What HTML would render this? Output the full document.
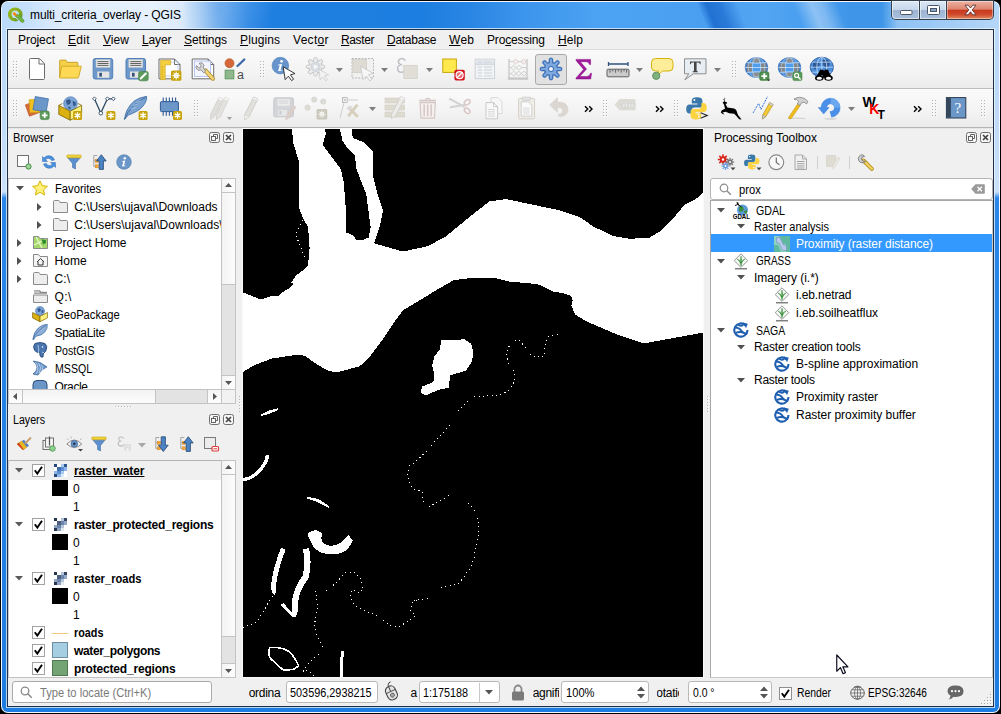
<!DOCTYPE html>
<html><head><meta charset="utf-8"><title>multi_criteria_overlay - QGIS</title>
<style>
*{box-sizing:border-box;margin:0;padding:0}
html,body{width:1001px;height:714px;overflow:hidden;background:#000}
body{font-family:"Liberation Sans",sans-serif;font-size:12px;color:#000;position:relative}
.a{position:absolute}
.t{position:absolute;white-space:pre;line-height:14px;height:14px}
.b{font-weight:bold}
u{text-decoration:underline;text-underline-offset:1px;text-decoration-skip-ink:none}
svg{position:absolute;overflow:visible}
</style></head><body>
<!-- window frame -->
<div class="a" id="win" style="left:0;top:0;width:1001px;height:714px;background:#000"></div>
<div class="a" style="left:1px;top:1px;width:999px;height:712px;border-radius:7px;background:#f4f9ff"></div>
<div class="a" id="glass" style="left:2px;top:2px;width:997px;height:710px;border-radius:6px;background:
linear-gradient(180deg,#bbd9fa 0,#bdd9f8 100px,#c9e1fa 190px,#2a86e8 196px,#2482e6 400px,#1f7de2 100%)"></div>
<!-- title bar -->
<div class="a" id="title" style="left:2px;top:2px;width:997px;height:27px;border-radius:6px 6px 0 0;overflow:hidden;background:
linear-gradient(90deg,#b9d9fb 0,#c6e0fb 26px,#deecfc 60px,#e6f1fc 150px,#dbeafb 180px,#a5cbf3 198px,#62a5ec 216px,#3089e5 246px,#1f7fe0 270px,#1c7ee0 420px,#2a86e4 470px,#3c95ec 520px,#4da3f3 600px,#4a9ff0 700px,#52a5f2 760px,#4a9ff0 800px,#3f95e8 850px,#3f95e8 880px,#8ec2f4 896px,#b5d6f7 997px)">
<div class="a" style="left:700px;top:0;width:40px;height:28px;transform:skewX(22deg);background:linear-gradient(90deg,rgba(25,105,205,0) 0,rgba(25,105,205,.85) 9px,rgba(25,105,205,.7) 22px,rgba(25,105,205,0) 40px)"></div>
<div class="a" style="left:796px;top:0;width:44px;height:28px;transform:skewX(22deg);background:linear-gradient(90deg,rgba(255,255,255,0) 0,rgba(255,255,255,.38) 18px,rgba(255,255,255,.3) 28px,rgba(255,255,255,0) 44px)"></div>
<div class="a" style="left:180px;top:0;width:90px;height:28px;transform:skewX(-25deg);background:linear-gradient(90deg,rgba(255,255,255,0) 0,rgba(255,255,255,.12) 40px,rgba(255,255,255,0) 90px)"></div>
</div>
<!-- client area -->
<div class="a" style="left:6px;top:28px;width:989px;height:680px;border:1px solid rgba(235,245,255,.75)"></div>
<div class="a" id="cborder" style="left:7px;top:29px;width:987px;height:678px;background:#1f3047"></div>
<div class="a" id="client" style="left:8px;top:30px;width:985px;height:676px;background:#f0f0f0"></div>
<div class="t" style="left:30px;top:8px;font-size:12px;letter-spacing:-.11px">multi_criteria_overlay - QGIS</div>
<!-- qgis logo -->
<svg style="left:7px;top:7px" width="18" height="17" viewBox="0 0 18 17"><defs><linearGradient id="qg" x1="0" y1="0" x2="1" y2="1"><stop offset="0" stop-color="#9bb81a"/><stop offset=".55" stop-color="#84ac1e"/><stop offset="1" stop-color="#4f9430"/></linearGradient></defs><path d="M8.200,.4 a7.300,7 0 1 0 0,14 q1.700,0 3.100,-.6 l-2.700,-2.800 q-3.500,.4 -4.200,-3.600 q.2,-3.700 3.800,-3.800 q3.600,.2 3.800,3.700 q0,1 -.4,1.900 l2.800,2.700 q1.200,-1.900 1.200,-4.500 a7.300,7 0 0 0 -7.400,-7 z" fill="url(#qg)"/><path d="M7.900,7.600 l3.300,-.1 5.700,5.600 q.5,1.500 -.4,2.100 q-1,.6 -2.100,-.2 l-5.900,-5.500 z" fill="#6db33f" stroke="#4c8a22" stroke-width=".5"/><circle cx="7.400" cy="6.800" r="1.700" fill="#f6b81c"/><path d="M6.600,6 l3.200,3.200" stroke="#ee7913" stroke-width="1.500"/></svg>
<!-- caption buttons -->
<div class="a" style="left:891px;top:0;width:103px;height:20px;background:#34404e;border-radius:0 0 5px 5px"></div>
<div class="a" style="left:892px;top:1px;width:27px;height:18px;border-radius:0 0 0 4px;background:linear-gradient(#dbe7f5 0,#c6d7ec 48%,#9db5d3 52%,#a9c0dc 100%);box-shadow:inset 0 0 0 1px rgba(255,255,255,.55)"></div>
<div class="a" style="left:920px;top:1px;width:26px;height:18px;background:linear-gradient(#dbe7f5 0,#c6d7ec 48%,#9db5d3 52%,#a9c0dc 100%);box-shadow:inset 0 0 0 1px rgba(255,255,255,.55)"></div>
<div class="a" style="left:947px;top:1px;width:46px;height:18px;border-radius:0 0 4px 0;background:linear-gradient(#eeb3a4 0,#dd8570 45%,#c9391d 52%,#d04a2c 75%,#e08a60 100%);box-shadow:inset 0 0 0 1px rgba(255,255,255,.4)"></div>
<svg style="left:900px;top:10px" width="13" height="5" viewBox="0 0 13 5"><rect x=".5" y=".5" width="11.500" height="4" rx="1" fill="#fff" stroke="#4a5668" stroke-width="1"/></svg>
<svg style="left:927px;top:5px" width="13" height="10" viewBox="0 0 13 10"><rect x=".5" y=".5" width="12" height="9" rx="1" fill="#fff" stroke="#4a5668" stroke-width="1"/><rect x="3.500" y="3.500" width="6" height="3" fill="#8aa6c8" stroke="#4a5668" stroke-width="1"/></svg>
<svg style="left:964px;top:4px" width="13" height="12" viewBox="0 0 13 12"><path d="M1,1.200 h3.200 l2.300,2.800 2.300,-2.800 h3.200 l-3.800,4.700 3.900,4.900 h-3.300 l-2.300,-3 -2.300,3 h-3.300 l3.900,-4.900 z" fill="#fff" stroke="#5a3030" stroke-width=".9" stroke-linejoin="round"/></svg>
<!-- menu + toolbars -->
<div class="a" style="left:8px;top:30px;width:985px;height:19px;background:#f0f0f0"></div>
<div class="a" style="left:8px;top:49px;width:985px;height:1px;background:#dcdcdc"></div>
<div class="t" style="left:18px;top:33px;letter-spacing:-0.06px;">Pro<u>j</u>ect</div>
<div class="t" style="left:68px;top:33px;letter-spacing:0.27px;"><u>E</u>dit</div>
<div class="t" style="left:103px;top:33px;letter-spacing:0.07px;"><u>V</u>iew</div>
<div class="t" style="left:142px;top:33px;letter-spacing:-0.13px;"><u>L</u>ayer</div>
<div class="t" style="left:184px;top:33px;letter-spacing:-0.05px;"><u>S</u>ettings</div>
<div class="t" style="left:240px;top:33px;letter-spacing:0.11px;"><u>P</u>lugins</div>
<div class="t" style="left:293px;top:33px;letter-spacing:0.29px;">Vect<u>o</u>r</div>
<div class="t" style="left:341px;top:33px;letter-spacing:-0.37px;"><u>R</u>aster</div>
<div class="t" style="left:387px;top:33px;letter-spacing:-0.27px;"><u>D</u>atabase</div>
<div class="t" style="left:449px;top:33px;letter-spacing:0.27px;"><u>W</u>eb</div>
<div class="t" style="left:487px;top:33px;letter-spacing:-0.15px;">Pro<u>c</u>essing</div>
<div class="t" style="left:558px;top:33px;letter-spacing:0.1px;"><u>H</u>elp</div>
<div class="a" style="left:8px;top:50px;width:985px;height:38px;background:linear-gradient(#fafafa,#f3f3f3 60%,#ececec)"></div>
<div class="a" style="left:8px;top:88px;width:985px;height:1px;background:#bdbdbd"></div>
<div class="a" style="left:8px;top:89px;width:985px;height:38px;background:linear-gradient(#fbfbfb,#f3f3f3 60%,#ebebeb)"></div>
<div class="a" style="left:8px;top:127px;width:985px;height:1px;background:#b4b4b4"></div>
<div class="a" style="left:8px;top:128px;width:985px;height:1px;background:#e6e6e6"></div>
<svg style="left:13px;top:61px" width="5" height="17" viewBox="0 0 5 17" shape-rendering="crispEdges"><rect x="1" y="1" width="1" height="1" fill="#fff"/><rect x="0" y="0" width="1" height="1" fill="#b2b2b2"/><rect x="4" y="1" width="1" height="1" fill="#fff"/><rect x="3" y="0" width="1" height="1" fill="#b2b2b2"/><rect x="1" y="4" width="1" height="1" fill="#fff"/><rect x="0" y="3" width="1" height="1" fill="#b2b2b2"/><rect x="4" y="4" width="1" height="1" fill="#fff"/><rect x="3" y="3" width="1" height="1" fill="#b2b2b2"/><rect x="1" y="7" width="1" height="1" fill="#fff"/><rect x="0" y="6" width="1" height="1" fill="#b2b2b2"/><rect x="4" y="7" width="1" height="1" fill="#fff"/><rect x="3" y="6" width="1" height="1" fill="#b2b2b2"/><rect x="1" y="10" width="1" height="1" fill="#fff"/><rect x="0" y="9" width="1" height="1" fill="#b2b2b2"/><rect x="4" y="10" width="1" height="1" fill="#fff"/><rect x="3" y="9" width="1" height="1" fill="#b2b2b2"/><rect x="1" y="13" width="1" height="1" fill="#fff"/><rect x="0" y="12" width="1" height="1" fill="#b2b2b2"/><rect x="4" y="13" width="1" height="1" fill="#fff"/><rect x="3" y="12" width="1" height="1" fill="#b2b2b2"/><rect x="1" y="16" width="1" height="1" fill="#fff"/><rect x="0" y="15" width="1" height="1" fill="#b2b2b2"/><rect x="4" y="16" width="1" height="1" fill="#fff"/><rect x="3" y="15" width="1" height="1" fill="#b2b2b2"/></svg>
<svg style="left:260px;top:61px" width="5" height="17" viewBox="0 0 5 17" shape-rendering="crispEdges"><rect x="1" y="1" width="1" height="1" fill="#fff"/><rect x="0" y="0" width="1" height="1" fill="#b2b2b2"/><rect x="4" y="1" width="1" height="1" fill="#fff"/><rect x="3" y="0" width="1" height="1" fill="#b2b2b2"/><rect x="1" y="4" width="1" height="1" fill="#fff"/><rect x="0" y="3" width="1" height="1" fill="#b2b2b2"/><rect x="4" y="4" width="1" height="1" fill="#fff"/><rect x="3" y="3" width="1" height="1" fill="#b2b2b2"/><rect x="1" y="7" width="1" height="1" fill="#fff"/><rect x="0" y="6" width="1" height="1" fill="#b2b2b2"/><rect x="4" y="7" width="1" height="1" fill="#fff"/><rect x="3" y="6" width="1" height="1" fill="#b2b2b2"/><rect x="1" y="10" width="1" height="1" fill="#fff"/><rect x="0" y="9" width="1" height="1" fill="#b2b2b2"/><rect x="4" y="10" width="1" height="1" fill="#fff"/><rect x="3" y="9" width="1" height="1" fill="#b2b2b2"/><rect x="1" y="13" width="1" height="1" fill="#fff"/><rect x="0" y="12" width="1" height="1" fill="#b2b2b2"/><rect x="4" y="13" width="1" height="1" fill="#fff"/><rect x="3" y="12" width="1" height="1" fill="#b2b2b2"/><rect x="1" y="16" width="1" height="1" fill="#fff"/><rect x="0" y="15" width="1" height="1" fill="#b2b2b2"/><rect x="4" y="16" width="1" height="1" fill="#fff"/><rect x="3" y="15" width="1" height="1" fill="#b2b2b2"/></svg>
<svg style="left:732px;top:61px" width="5" height="17" viewBox="0 0 5 17" shape-rendering="crispEdges"><rect x="1" y="1" width="1" height="1" fill="#fff"/><rect x="0" y="0" width="1" height="1" fill="#b2b2b2"/><rect x="4" y="1" width="1" height="1" fill="#fff"/><rect x="3" y="0" width="1" height="1" fill="#b2b2b2"/><rect x="1" y="4" width="1" height="1" fill="#fff"/><rect x="0" y="3" width="1" height="1" fill="#b2b2b2"/><rect x="4" y="4" width="1" height="1" fill="#fff"/><rect x="3" y="3" width="1" height="1" fill="#b2b2b2"/><rect x="1" y="7" width="1" height="1" fill="#fff"/><rect x="0" y="6" width="1" height="1" fill="#b2b2b2"/><rect x="4" y="7" width="1" height="1" fill="#fff"/><rect x="3" y="6" width="1" height="1" fill="#b2b2b2"/><rect x="1" y="10" width="1" height="1" fill="#fff"/><rect x="0" y="9" width="1" height="1" fill="#b2b2b2"/><rect x="4" y="10" width="1" height="1" fill="#fff"/><rect x="3" y="9" width="1" height="1" fill="#b2b2b2"/><rect x="1" y="13" width="1" height="1" fill="#fff"/><rect x="0" y="12" width="1" height="1" fill="#b2b2b2"/><rect x="4" y="13" width="1" height="1" fill="#fff"/><rect x="3" y="12" width="1" height="1" fill="#b2b2b2"/><rect x="1" y="16" width="1" height="1" fill="#fff"/><rect x="0" y="15" width="1" height="1" fill="#b2b2b2"/><rect x="4" y="16" width="1" height="1" fill="#fff"/><rect x="3" y="15" width="1" height="1" fill="#b2b2b2"/></svg>
<svg style="left:13px;top:100px" width="5" height="17" viewBox="0 0 5 17" shape-rendering="crispEdges"><rect x="1" y="1" width="1" height="1" fill="#fff"/><rect x="0" y="0" width="1" height="1" fill="#b2b2b2"/><rect x="4" y="1" width="1" height="1" fill="#fff"/><rect x="3" y="0" width="1" height="1" fill="#b2b2b2"/><rect x="1" y="4" width="1" height="1" fill="#fff"/><rect x="0" y="3" width="1" height="1" fill="#b2b2b2"/><rect x="4" y="4" width="1" height="1" fill="#fff"/><rect x="3" y="3" width="1" height="1" fill="#b2b2b2"/><rect x="1" y="7" width="1" height="1" fill="#fff"/><rect x="0" y="6" width="1" height="1" fill="#b2b2b2"/><rect x="4" y="7" width="1" height="1" fill="#fff"/><rect x="3" y="6" width="1" height="1" fill="#b2b2b2"/><rect x="1" y="10" width="1" height="1" fill="#fff"/><rect x="0" y="9" width="1" height="1" fill="#b2b2b2"/><rect x="4" y="10" width="1" height="1" fill="#fff"/><rect x="3" y="9" width="1" height="1" fill="#b2b2b2"/><rect x="1" y="13" width="1" height="1" fill="#fff"/><rect x="0" y="12" width="1" height="1" fill="#b2b2b2"/><rect x="4" y="13" width="1" height="1" fill="#fff"/><rect x="3" y="12" width="1" height="1" fill="#b2b2b2"/><rect x="1" y="16" width="1" height="1" fill="#fff"/><rect x="0" y="15" width="1" height="1" fill="#b2b2b2"/><rect x="4" y="16" width="1" height="1" fill="#fff"/><rect x="3" y="15" width="1" height="1" fill="#b2b2b2"/></svg>
<svg style="left:194px;top:100px" width="5" height="17" viewBox="0 0 5 17" shape-rendering="crispEdges"><rect x="1" y="1" width="1" height="1" fill="#fff"/><rect x="0" y="0" width="1" height="1" fill="#b2b2b2"/><rect x="4" y="1" width="1" height="1" fill="#fff"/><rect x="3" y="0" width="1" height="1" fill="#b2b2b2"/><rect x="1" y="4" width="1" height="1" fill="#fff"/><rect x="0" y="3" width="1" height="1" fill="#b2b2b2"/><rect x="4" y="4" width="1" height="1" fill="#fff"/><rect x="3" y="3" width="1" height="1" fill="#b2b2b2"/><rect x="1" y="7" width="1" height="1" fill="#fff"/><rect x="0" y="6" width="1" height="1" fill="#b2b2b2"/><rect x="4" y="7" width="1" height="1" fill="#fff"/><rect x="3" y="6" width="1" height="1" fill="#b2b2b2"/><rect x="1" y="10" width="1" height="1" fill="#fff"/><rect x="0" y="9" width="1" height="1" fill="#b2b2b2"/><rect x="4" y="10" width="1" height="1" fill="#fff"/><rect x="3" y="9" width="1" height="1" fill="#b2b2b2"/><rect x="1" y="13" width="1" height="1" fill="#fff"/><rect x="0" y="12" width="1" height="1" fill="#b2b2b2"/><rect x="4" y="13" width="1" height="1" fill="#fff"/><rect x="3" y="12" width="1" height="1" fill="#b2b2b2"/><rect x="1" y="16" width="1" height="1" fill="#fff"/><rect x="0" y="15" width="1" height="1" fill="#b2b2b2"/><rect x="4" y="16" width="1" height="1" fill="#fff"/><rect x="3" y="15" width="1" height="1" fill="#b2b2b2"/></svg>
<svg style="left:603px;top:100px" width="5" height="17" viewBox="0 0 5 17" shape-rendering="crispEdges"><rect x="1" y="1" width="1" height="1" fill="#fff"/><rect x="0" y="0" width="1" height="1" fill="#b2b2b2"/><rect x="4" y="1" width="1" height="1" fill="#fff"/><rect x="3" y="0" width="1" height="1" fill="#b2b2b2"/><rect x="1" y="4" width="1" height="1" fill="#fff"/><rect x="0" y="3" width="1" height="1" fill="#b2b2b2"/><rect x="4" y="4" width="1" height="1" fill="#fff"/><rect x="3" y="3" width="1" height="1" fill="#b2b2b2"/><rect x="1" y="7" width="1" height="1" fill="#fff"/><rect x="0" y="6" width="1" height="1" fill="#b2b2b2"/><rect x="4" y="7" width="1" height="1" fill="#fff"/><rect x="3" y="6" width="1" height="1" fill="#b2b2b2"/><rect x="1" y="10" width="1" height="1" fill="#fff"/><rect x="0" y="9" width="1" height="1" fill="#b2b2b2"/><rect x="4" y="10" width="1" height="1" fill="#fff"/><rect x="3" y="9" width="1" height="1" fill="#b2b2b2"/><rect x="1" y="13" width="1" height="1" fill="#fff"/><rect x="0" y="12" width="1" height="1" fill="#b2b2b2"/><rect x="4" y="13" width="1" height="1" fill="#fff"/><rect x="3" y="12" width="1" height="1" fill="#b2b2b2"/><rect x="1" y="16" width="1" height="1" fill="#fff"/><rect x="0" y="15" width="1" height="1" fill="#b2b2b2"/><rect x="4" y="16" width="1" height="1" fill="#fff"/><rect x="3" y="15" width="1" height="1" fill="#b2b2b2"/></svg>
<svg style="left:674px;top:100px" width="5" height="17" viewBox="0 0 5 17" shape-rendering="crispEdges"><rect x="1" y="1" width="1" height="1" fill="#fff"/><rect x="0" y="0" width="1" height="1" fill="#b2b2b2"/><rect x="4" y="1" width="1" height="1" fill="#fff"/><rect x="3" y="0" width="1" height="1" fill="#b2b2b2"/><rect x="1" y="4" width="1" height="1" fill="#fff"/><rect x="0" y="3" width="1" height="1" fill="#b2b2b2"/><rect x="4" y="4" width="1" height="1" fill="#fff"/><rect x="3" y="3" width="1" height="1" fill="#b2b2b2"/><rect x="1" y="7" width="1" height="1" fill="#fff"/><rect x="0" y="6" width="1" height="1" fill="#b2b2b2"/><rect x="4" y="7" width="1" height="1" fill="#fff"/><rect x="3" y="6" width="1" height="1" fill="#b2b2b2"/><rect x="1" y="10" width="1" height="1" fill="#fff"/><rect x="0" y="9" width="1" height="1" fill="#b2b2b2"/><rect x="4" y="10" width="1" height="1" fill="#fff"/><rect x="3" y="9" width="1" height="1" fill="#b2b2b2"/><rect x="1" y="13" width="1" height="1" fill="#fff"/><rect x="0" y="12" width="1" height="1" fill="#b2b2b2"/><rect x="4" y="13" width="1" height="1" fill="#fff"/><rect x="3" y="12" width="1" height="1" fill="#b2b2b2"/><rect x="1" y="16" width="1" height="1" fill="#fff"/><rect x="0" y="15" width="1" height="1" fill="#b2b2b2"/><rect x="4" y="16" width="1" height="1" fill="#fff"/><rect x="3" y="15" width="1" height="1" fill="#b2b2b2"/></svg>
<svg style="left:932px;top:100px" width="5" height="17" viewBox="0 0 5 17" shape-rendering="crispEdges"><rect x="1" y="1" width="1" height="1" fill="#fff"/><rect x="0" y="0" width="1" height="1" fill="#b2b2b2"/><rect x="4" y="1" width="1" height="1" fill="#fff"/><rect x="3" y="0" width="1" height="1" fill="#b2b2b2"/><rect x="1" y="4" width="1" height="1" fill="#fff"/><rect x="0" y="3" width="1" height="1" fill="#b2b2b2"/><rect x="4" y="4" width="1" height="1" fill="#fff"/><rect x="3" y="3" width="1" height="1" fill="#b2b2b2"/><rect x="1" y="7" width="1" height="1" fill="#fff"/><rect x="0" y="6" width="1" height="1" fill="#b2b2b2"/><rect x="4" y="7" width="1" height="1" fill="#fff"/><rect x="3" y="6" width="1" height="1" fill="#b2b2b2"/><rect x="1" y="10" width="1" height="1" fill="#fff"/><rect x="0" y="9" width="1" height="1" fill="#b2b2b2"/><rect x="4" y="10" width="1" height="1" fill="#fff"/><rect x="3" y="9" width="1" height="1" fill="#b2b2b2"/><rect x="1" y="13" width="1" height="1" fill="#fff"/><rect x="0" y="12" width="1" height="1" fill="#b2b2b2"/><rect x="4" y="13" width="1" height="1" fill="#fff"/><rect x="3" y="12" width="1" height="1" fill="#b2b2b2"/><rect x="1" y="16" width="1" height="1" fill="#fff"/><rect x="0" y="15" width="1" height="1" fill="#b2b2b2"/><rect x="4" y="16" width="1" height="1" fill="#fff"/><rect x="3" y="15" width="1" height="1" fill="#b2b2b2"/></svg>
<svg style="left:981px;top:100px" width="5" height="17" viewBox="0 0 5 17" shape-rendering="crispEdges"><rect x="1" y="1" width="1" height="1" fill="#fff"/><rect x="0" y="0" width="1" height="1" fill="#b2b2b2"/><rect x="4" y="1" width="1" height="1" fill="#fff"/><rect x="3" y="0" width="1" height="1" fill="#b2b2b2"/><rect x="1" y="4" width="1" height="1" fill="#fff"/><rect x="0" y="3" width="1" height="1" fill="#b2b2b2"/><rect x="4" y="4" width="1" height="1" fill="#fff"/><rect x="3" y="3" width="1" height="1" fill="#b2b2b2"/><rect x="1" y="7" width="1" height="1" fill="#fff"/><rect x="0" y="6" width="1" height="1" fill="#b2b2b2"/><rect x="4" y="7" width="1" height="1" fill="#fff"/><rect x="3" y="6" width="1" height="1" fill="#b2b2b2"/><rect x="1" y="10" width="1" height="1" fill="#fff"/><rect x="0" y="9" width="1" height="1" fill="#b2b2b2"/><rect x="4" y="10" width="1" height="1" fill="#fff"/><rect x="3" y="9" width="1" height="1" fill="#b2b2b2"/><rect x="1" y="13" width="1" height="1" fill="#fff"/><rect x="0" y="12" width="1" height="1" fill="#b2b2b2"/><rect x="4" y="13" width="1" height="1" fill="#fff"/><rect x="3" y="12" width="1" height="1" fill="#b2b2b2"/><rect x="1" y="16" width="1" height="1" fill="#fff"/><rect x="0" y="15" width="1" height="1" fill="#b2b2b2"/><rect x="4" y="16" width="1" height="1" fill="#fff"/><rect x="3" y="15" width="1" height="1" fill="#b2b2b2"/></svg>
<svg style="left:335.5px;top:67.5px" width="7" height="4" viewBox="0 0 7 4"><path d="M0,0 h7 l-3.5,4 z" fill="#7d7d7d"/></svg>
<svg style="left:380.5px;top:67.5px" width="7" height="4" viewBox="0 0 7 4"><path d="M0,0 h7 l-3.5,4 z" fill="#7d7d7d"/></svg>
<svg style="left:425.5px;top:67.5px" width="7" height="4" viewBox="0 0 7 4"><path d="M0,0 h7 l-3.5,4 z" fill="#7d7d7d"/></svg>
<svg style="left:635.5px;top:67.5px" width="7" height="4" viewBox="0 0 7 4"><path d="M0,0 h7 l-3.5,4 z" fill="#7d7d7d"/></svg>
<svg style="left:713.5px;top:67.5px" width="7" height="4" viewBox="0 0 7 4"><path d="M0,0 h7 l-3.5,4 z" fill="#7d7d7d"/></svg>
<svg style="left:368.5px;top:106.5px" width="7" height="4" viewBox="0 0 7 4"><path d="M0,0 h7 l-3.5,4 z" fill="#7d7d7d"/></svg>
<svg style="left:848.0px;top:106.5px" width="7" height="4" viewBox="0 0 7 4"><path d="M0,0 h7 l-3.5,4 z" fill="#7d7d7d"/></svg>
<svg style="left:226.5px;top:117.0px" width="5" height="3" viewBox="0 0 5 3"><path d="M0,0 h5 l-2.5,3 z" fill="#a0a0a0"/></svg>
<svg style="left:584px;top:104.5px" width="10" height="8" viewBox="0 0 10 8"><path d="M1,1.200 L3.800,4 1,6.800 M5.200,1.200 L8,4 5.200,6.800" fill="none" stroke="#000" stroke-width="1.400"/></svg>
<svg style="left:655px;top:104.5px" width="10" height="8" viewBox="0 0 10 8"><path d="M1,1.200 L3.800,4 1,6.800 M5.200,1.200 L8,4 5.200,6.800" fill="none" stroke="#000" stroke-width="1.400"/></svg>
<svg style="left:912.5px;top:104.5px" width="10" height="8" viewBox="0 0 10 8"><path d="M1,1.200 L3.800,4 1,6.800 M5.200,1.200 L8,4 5.200,6.800" fill="none" stroke="#000" stroke-width="1.400"/></svg>
<div class="a" style="left:535px;top:54px;width:32px;height:31px;background:#e1e1e1;border:1px solid #a9a9a9;border-radius:3px"></div>
<svg style="left:25px;top:57px" width="24" height="24" viewBox="0 0 24 24"><path d="M5.500,1.500 h8.500 q.4,0 .7,.3 l4.500,4.500 q.3,.3 .3,.7 v14.500 q0,1 -1,1 h-13 q-1,0 -1,-1 v-19 q0,-1 1,-1 z" fill="#fff" stroke="#6c6c6c"/><path d="M14,1.800 v5.200 h5.200" fill="none" stroke="#6c6c6c"/></svg>
<svg style="left:58px;top:57px" width="24" height="24" viewBox="0 0 24 24"><path d="M1.7,20.5 v-16.6 q0,-.8 .8,-.8 h5 q.6,0 .9,.6 l.8,1.6 h9.8 q.8,0 .8,.8 v3" fill="#f7d04a" stroke="#c9a227"/><path d="M3.6,9.2 h19.2 q.6,0 .4,.6 l-2.7,10.6 q-.2,.6 -.8,.6 h-17.6 q-.6,0 -.4,-.6 z" fill="#fdd955" stroke="#d2ab2a"/></svg>
<svg style="left:91px;top:57px" width="24" height="24" viewBox="0 0 24 24"><rect x="2.2" y="1.5" width="19.5" height="20.5" rx="2" fill="#6d98c9" stroke="#5080b8"/><rect x="5" y="2.5" width="14" height="8" fill="#e6e6e6" stroke="#b8c4d0" stroke-width=".5"/><path d="M6.5,4.6 h11 M6.5,6.5 h11 M6.5,8.4 h11" stroke="#555" stroke-width=".9"/><rect x="6.3" y="14.5" width="12" height="6.3" fill="#e4e4e4"/><rect x="8.3" y="15.8" width="2.6" height="3.8" fill="#34507a"/></svg>
<svg style="left:124px;top:57px" width="24" height="24" viewBox="0 0 24 24"><rect x="2" y="1.5" width="19.5" height="20.5" rx="2" fill="#6d98c9" stroke="#5080b8"/><rect x="4.8" y="2.5" width="14" height="8" fill="#e6e6e6" stroke="#b8c4d0" stroke-width=".5"/><path d="M6.3,4.6 h11 M6.3,6.5 h11 M6.3,8.4 h11" stroke="#555" stroke-width=".9"/><rect x="6" y="14.5" width="12" height="6.3" fill="#e4e4e4"/><rect x="8" y="15.8" width="2.6" height="3.8" fill="#34507a"/><rect x="14.6" y="14.4" width="9.6" height="9.4" rx="1.8" fill="#5b9a5b" stroke="#3f7f3f" stroke-width=".6"/><path d="M16.8,21.5 l5,-5" stroke="#fff" stroke-width="2" stroke-linecap="round"/></svg>
<svg style="left:157.5px;top:57px" width="24" height="24" viewBox="0 0 24 24"><path d="M1,2 h15.5 l5.5,5.5 v14.3 h-21 z" fill="#fff" stroke="#6a6a6a"/><path d="M16.5,2 v5.5 h5.5" fill="none" stroke="#6a6a6a"/><rect x="4" y="5" width="16" height="14" fill="none" stroke="#b8c8f0" stroke-width=".8"/><path d="M2.6,3.4 h10 v4.4 h-5.4 v14.8 h-4.6 z" fill="#f5cf3c" stroke="#d0a818" stroke-width=".7"/><path d="M3.5,10 h2 M3.5,12.5 h1.4 M3.5,15 h2 M3.5,17.5 h1.4 M3.5,20 h2" stroke="#b08a10" stroke-width=".6"/><rect x="13" y="13.4" width="10.4" height="10.4" rx="1.6" fill="#c8a40a"/><circle cx="18.2" cy="18.6" r="2" fill="none" stroke="#fff" stroke-width="1.2"/><path d="M18.2,14.6 v8 M14.2,18.6 h8 M15.4,15.8 l5.6,5.6 M21,15.8 l-5.6,5.6" stroke="#fff" stroke-width=".9"/></svg>
<svg style="left:190.5px;top:57px" width="24" height="24" viewBox="0 0 24 24"><path d="M1.200,2 h16 l5.500,5.500 v14.300 h-21.500 z" fill="#fff" stroke="#6a6a6a"/><path d="M17.200,2 v5.500 h5.500" fill="none" stroke="#6a6a6a"/><rect x="3.400" y="4" width="16" height="15.500" fill="#f2f5ff" stroke="#a8b8ee" stroke-width=".8"/><path d="M14.600,13.600 l7.200,8" stroke="#a88820" stroke-width="4.200" stroke-linecap="round"/><path d="M14.600,13.600 l7.200,8" stroke="#f3d77a" stroke-width="2.600" stroke-linecap="round"/><path d="M8.200,6.200 l2.800,-.4 2,2.400 -.9,2.800 2.600,3 -2,1.800 -2.700,-3 -2.900,.5 -2.200,-2.400 .7,-2.300 2.200,2.400 1.800,-.4 .5,-1.700 z" fill="#dcdcdc" stroke="#7a7a7a" stroke-width=".8" stroke-linejoin="round"/></svg>
<svg style="left:223px;top:57px" width="24" height="24" viewBox="0 0 24 24"><circle cx="6.5" cy="6.2" r="4.5" fill="#d4683a" stroke="#b8501f" stroke-width=".6"/><path d="M14.5,9 l6.8,-6.5" stroke="#3d6aa8" stroke-width="2.3" stroke-linecap="round"/><rect x="2.2" y="13.2" width="8.6" height="8.6" fill="#8fb88f" stroke="#5f9a5f"/><text x="14" y="21.600" font-family="Liberation Sans" font-size="12.500" fill="#4d4d4d">a</text></svg>
<svg style="left:269px;top:57px" width="24" height="24" viewBox="0 0 24 24"><circle cx="11.4" cy="8.6" r="8.3" fill="#6694cb" stroke="#4a7ab8" stroke-width=".6"/><circle cx="12.6" cy="4.3" r="1.4" fill="#fff"/><path d="M9.3,7.6 l3.8,-.6 -1.6,6 1.8,-.3 -.2,.9 -4,.6 1.6,-5.9 -1.6,.2 z" fill="#fff"/><path d="M14.2,9.8 l11.8,6.8 -4.6,1.2 3.2,4.4 -2,1.4 -3.2,-4.4 -3.2,3.4 z" fill="#fff" stroke="#222" stroke-width=".9" stroke-linejoin="round"/></svg>
<svg style="left:304.5px;top:57px" width="24" height="24" viewBox="0 0 24 24"><g transform="translate(-1.500,-2.200)"><g fill="#ececec" stroke="#c2c2c2" stroke-width="1" stroke-linejoin="round"><circle cx="12" cy="12" r="6.400"/><rect x="10.300" y="2.800" width="3.400" height="6" rx="1.600" transform="rotate(0 12 12)"/><rect x="10.300" y="2.800" width="3.400" height="6" rx="1.600" transform="rotate(45 12 12)"/><rect x="10.300" y="2.800" width="3.400" height="6" rx="1.600" transform="rotate(90 12 12)"/><rect x="10.300" y="2.800" width="3.400" height="6" rx="1.600" transform="rotate(135 12 12)"/><rect x="10.300" y="2.800" width="3.400" height="6" rx="1.600" transform="rotate(180 12 12)"/><rect x="10.300" y="2.800" width="3.400" height="6" rx="1.600" transform="rotate(225 12 12)"/><rect x="10.300" y="2.800" width="3.400" height="6" rx="1.600" transform="rotate(270 12 12)"/><rect x="10.300" y="2.800" width="3.400" height="6" rx="1.600" transform="rotate(315 12 12)"/></g><circle cx="12" cy="12" r="5.900" fill="#ececec"/><rect x="10.800" y="3.400" width="2.400" height="5" rx="1.200" fill="#ececec" transform="rotate(0 12 12)"/><rect x="10.800" y="3.400" width="2.400" height="5" rx="1.200" fill="#ececec" transform="rotate(45 12 12)"/><rect x="10.800" y="3.400" width="2.400" height="5" rx="1.200" fill="#ececec" transform="rotate(90 12 12)"/><rect x="10.800" y="3.400" width="2.400" height="5" rx="1.200" fill="#ececec" transform="rotate(135 12 12)"/><rect x="10.800" y="3.400" width="2.400" height="5" rx="1.200" fill="#ececec" transform="rotate(180 12 12)"/><rect x="10.800" y="3.400" width="2.400" height="5" rx="1.200" fill="#ececec" transform="rotate(225 12 12)"/><rect x="10.800" y="3.400" width="2.400" height="5" rx="1.200" fill="#ececec" transform="rotate(270 12 12)"/><rect x="10.800" y="3.400" width="2.400" height="5" rx="1.200" fill="#ececec" transform="rotate(315 12 12)"/><circle cx="12" cy="12" r="4.600" fill="#d8dde3" stroke="#c6cad0" stroke-width=".7"/><path d="M10.400,9.400 l4.400,2.600 -4.400,2.600 z" fill="#f8f8f8"/></g><path d="M13.800,12 l9.800,5.800 -4,1 2.800,3.900 -1.700,1.200 -2.800,-3.900 -2.700,2.900 z" fill="#f2f2f2" stroke="#cbcbcb" stroke-width=".8"/></svg>
<svg style="left:350.5px;top:57px" width="24" height="24" viewBox="0 0 24 24"><rect x="1" y="1.500" width="21.500" height="19.500" fill="#f1f1f1" stroke="#adadad" stroke-width=".9" stroke-dasharray="1.800 1.400"/><rect x="1.800" y="2.300" width="13.800" height="13.400" fill="#dddbd2" stroke="#cbc9c0" stroke-width=".6"/><path d="M9.600,9.200 l12.800,7.200 -4.900,1.200 3.400,4.800 -2.100,1.500 -3.400,-4.800 -3.400,3.600 z" fill="#f6f6f6" stroke="#c4c4c4" stroke-width=".8"/></svg>
<svg style="left:395.5px;top:57px" width="24" height="24" viewBox="0 0 24 24"><path d="M9.400,4 q-1.200,-2.800 -4.200,-2.400 q-3,.6 -2.800,3.400 q.4,2.600 3.800,2.600 q-4.400,.2 -4.600,3.800 q0,3.800 4.200,3.800 q2.800,0 4,-2.400" fill="none" stroke="#bdbdc4" stroke-width="1.400"/><rect x="7.800" y="8.300" width="13.400" height="13.200" fill="#e0ded6" stroke="#cfcdc4" stroke-width=".7"/></svg>
<svg style="left:440.5px;top:57px" width="24" height="24" viewBox="0 0 24 24"><rect x="1.8" y="2" width="13.6" height="13.4" fill="#ffe94e" stroke="#c8a608" stroke-width="1"/><rect x="13.4" y="12.8" width="10.4" height="10.8" rx="1.8" fill="#d4141e"/><circle cx="18.6" cy="18.2" r="3.5" fill="#e86a70" stroke="#fff" stroke-width="1.2"/><path d="M16.2,20.6 l4.8,-4.8" stroke="#fff" stroke-width="1.3"/></svg>
<svg style="left:473px;top:57px" width="24" height="24" viewBox="0 0 24 24"><rect x="2.2" y="2.2" width="19.4" height="19.4" fill="#f1f3f5" stroke="#c9d0d8"/><rect x="2.7" y="2.7" width="18.4" height="4.4" fill="#e4e8ec"/><path d="M2.2,7.2 h19.4" stroke="#c9d0d8"/><path d="M5,5 h4 M11,5 h8 M5,10 h4 M11,10 h8 M5,13 h4 M11,13 h8 M5,16 h4 M11,16 h8 M5,19 h4 M11,19 h8" stroke="#cdd4dc" stroke-width="1.2"/></svg>
<svg style="left:505.5px;top:57px" width="24" height="24" viewBox="0 0 24 24"><path d="M3,2 v20 M21,2 v20" stroke="#c4c4c4" stroke-width="1.2"/><path d="M1.8,21.6 h20.4" stroke="#c8c8c8" stroke-width="2.4"/><path d="M3,4.6 h18 M3,10.6 h18 M3,16.6 h18" stroke="#c8c8c8" stroke-width=".9"/><g fill="#f3f3f3" stroke-width=".9"><path d="M7,4.6 l2.6,-2.4 2.6,2.4 -2.6,2.4 z M15,4.6 l2.6,-2.4 2.6,2.4 -2.6,2.4 z" stroke="#d9c4c4"/><path d="M5,10.6 l2.6,-2.4 2.6,2.4 -2.6,2.4 z M10.4,10.6 l2.6,-2.4 2.6,2.4 -2.6,2.4 z" stroke="#cdd4c8"/><path d="M5,16.6 l2.6,-2.4 2.6,2.4 -2.6,2.4 z M10.2,16.6 l2.6,-2.4 2.6,2.4 -2.6,2.4 z M15.4,16.6 l2.6,-2.4 2.6,2.4 -2.6,2.4 z" stroke="#ccc"/></g></svg>
<svg style="left:539px;top:57px" width="24" height="24" viewBox="0 0 24 24"><g fill="#3b6fb8" stroke="#3b6fb8" stroke-width=".4"><circle cx="12" cy="12" r="6.900"/><rect x="9.900" y=".8" width="4.200" height="7.500" rx="2.100" transform="rotate(0 12 12)"/><rect x="9.900" y=".8" width="4.200" height="7.500" rx="2.100" transform="rotate(45 12 12)"/><rect x="9.900" y=".8" width="4.200" height="7.500" rx="2.100" transform="rotate(90 12 12)"/><rect x="9.900" y=".8" width="4.200" height="7.500" rx="2.100" transform="rotate(135 12 12)"/><rect x="9.900" y=".8" width="4.200" height="7.500" rx="2.100" transform="rotate(180 12 12)"/><rect x="9.900" y=".8" width="4.200" height="7.500" rx="2.100" transform="rotate(225 12 12)"/><rect x="9.900" y=".8" width="4.200" height="7.500" rx="2.100" transform="rotate(270 12 12)"/><rect x="9.900" y=".8" width="4.200" height="7.500" rx="2.100" transform="rotate(315 12 12)"/></g><circle cx="12" cy="12" r="5.900" fill="#7ea7de"/><rect x="10.900" y="1.800" width="2.200" height="6.500" rx="1.100" fill="#7ea7de" transform="rotate(0 12 12)"/><rect x="10.900" y="1.800" width="2.200" height="6.500" rx="1.100" fill="#7ea7de" transform="rotate(45 12 12)"/><rect x="10.900" y="1.800" width="2.200" height="6.500" rx="1.100" fill="#7ea7de" transform="rotate(90 12 12)"/><rect x="10.900" y="1.800" width="2.200" height="6.500" rx="1.100" fill="#7ea7de" transform="rotate(135 12 12)"/><rect x="10.900" y="1.800" width="2.200" height="6.500" rx="1.100" fill="#7ea7de" transform="rotate(180 12 12)"/><rect x="10.900" y="1.800" width="2.200" height="6.500" rx="1.100" fill="#7ea7de" transform="rotate(225 12 12)"/><rect x="10.900" y="1.800" width="2.200" height="6.500" rx="1.100" fill="#7ea7de" transform="rotate(270 12 12)"/><rect x="10.900" y="1.800" width="2.200" height="6.500" rx="1.100" fill="#7ea7de" transform="rotate(315 12 12)"/><circle cx="12" cy="12" r="2.900" fill="#3b6fb8"/><circle cx="12" cy="12" r="2" fill="#eef3fa"/></svg>
<svg style="left:572px;top:57px" width="24" height="24" viewBox="0 0 24 24"><path d="M4,2.4 h14.6 v5.2 h-1.1 q-.6,-2.9 -3.2,-2.9 h-6 l6.3,7.4 -6.9,7.4 h7 q2.8,0 3.8,-3.2 h1.1 l-.9,5.7 h-14.7 v-1 l7.6,-8.6 -7.6,-9 z" fill="#a01a9c" stroke="#8a0a86" stroke-width=".5"/></svg>
<svg style="left:605.5px;top:57px" width="24" height="24" viewBox="0 0 24 24"><rect x="1" y="12.2" width="22" height="7.6" rx="1" fill="#cbcbcb" stroke="#5f5f5f"/><path d="M4,12.5 v3.2 M6.8,12.5 v2 M9.6,12.5 v3.2 M12.4,12.5 v2 M15.2,12.5 v3.2 M18,12.5 v2 M20.6,12.5 v3.2" stroke="#555" stroke-width=".9"/><path d="M2.5,7 h19.5 M2.5,5 v4 M22,5 v4" stroke="#2f527e" stroke-width="1.3"/></svg>
<svg style="left:650px;top:57px" width="24" height="24" viewBox="0 0 24 24"><path d="M5.5,1.5 h13.5 q4,0 4,4 v4.5 q0,4 -4,4 h-6.5 l-5,4.4 1,-4.4 h-3 q-4,0 -4,-4 v-4.5 q0,-4 4,-4 z" fill="#fdec98" stroke="#d6b30a" stroke-width="1"/><circle cx="6.2" cy="18.8" r="3.6" fill="#7fb27f" stroke="#5d8f5d"/></svg>
<svg style="left:683px;top:57px" width="24" height="24" viewBox="0 0 24 24"><path d="M1.5,1.8 h21.5 v15 h-12.6 l-8.6,6 4,-6 h-4.3 z" fill="#e6eef3" stroke="#8d8d8d"/><path d="M7,4.6 h10.6 v2.6 h-.6 q-.3,-1.6 -1.8,-1.6 h-1.6 v8 q0,1 1.4,1 v.6 h-5.4 v-.6 q1.4,0 1.4,-1 v-8 h-1.6 q-1.5,0 -1.8,1.6 h-.6 z" fill="#444"/></svg>
<svg style="left:744.5px;top:57px" width="24" height="24" viewBox="0 0 24 24"><ellipse cx="11.500" cy="10.500" rx="11.300" ry="10" fill="#3a80d2" stroke="#2a62b4" stroke-width=".6"/><ellipse cx="11.500" cy="10.500" rx="9" ry="9.700" fill="#4a92e2"/><path d="M2.200,6.200 q2.600,-.6 5,0 q-.8,4.300 0,8.600 q-2.400,.6 -5,0 q-1.600,-4.300 0,-8.600 z" fill="#858585"/><path d="M15.800,6.200 q2.600,-.6 5,0 q1.600,4.300 0,8.600 q-2.600,.6 -5,0 q.8,-4.300 0,-8.600 z" fill="#858585"/><path d="M8.400,1.300 q3.100,-1 6.200,0 q.9,1.900 1.100,4.100 q-4.200,.6 -8.400,0 q.2,-2.200 1.100,-4.100 z" fill="#8d8d8d"/><path d="M8.400,19.700 q3.100,1 6.200,0 q.9,-1.900 1.100,-4.100 q-4.200,-.6 -8.400,0 q.2,2.200 1.100,4.100 z" fill="#8d8d8d"/><path d="M7.400,6 q4.100,-.6 8.200,0 q.8,4.500 0,9 q-4.100,.6 -8.200,0 q-.8,-4.500 0,-9 z" fill="#4f9cec"/><ellipse cx="11.500" cy="10.500" rx="4.200" ry="9.800" fill="none" stroke="#bcdcfb" stroke-width=".7"/><path d="M.3,10.500 h22.400 M2,5.600 q9.500,1.200 19,0 M2,15.400 q9.500,-1.200 19,0" fill="none" stroke="#cfe6ff" stroke-width=".8"/><ellipse cx="11.500" cy="10.500" rx="8.400" ry="9.900" fill="none" stroke="#a8d0f8" stroke-width=".6"/><rect x="14.6" y="14.8" width="9.4" height="8.6" rx="1.6" fill="#4f8f4f" stroke="#3a7a3a" stroke-width=".5"/><path d="M19.3,16.2 v5.8 M16.4,19.1 h5.8" stroke="#fff" stroke-width="1.9"/><path d="M22,22.4 h3.4 l-1.7,1.9 z" fill="#333"/></svg>
<svg style="left:777.5px;top:57px" width="24" height="24" viewBox="0 0 24 24"><ellipse cx="11.500" cy="10.500" rx="11.300" ry="10" fill="#3a80d2" stroke="#2a62b4" stroke-width=".6"/><ellipse cx="11.500" cy="10.500" rx="9" ry="9.700" fill="#4a92e2"/><path d="M2.200,6.200 q2.600,-.6 5,0 q-.8,4.300 0,8.600 q-2.400,.6 -5,0 q-1.600,-4.300 0,-8.600 z" fill="#858585"/><path d="M15.800,6.200 q2.600,-.6 5,0 q1.600,4.300 0,8.600 q-2.600,.6 -5,0 q.8,-4.300 0,-8.600 z" fill="#858585"/><path d="M8.400,1.300 q3.100,-1 6.200,0 q.9,1.900 1.100,4.100 q-4.200,.6 -8.400,0 q.2,-2.200 1.100,-4.100 z" fill="#8d8d8d"/><path d="M8.400,19.700 q3.100,1 6.200,0 q.9,-1.900 1.100,-4.100 q-4.200,-.6 -8.400,0 q.2,2.200 1.100,4.100 z" fill="#8d8d8d"/><path d="M7.400,6 q4.100,-.6 8.200,0 q.8,4.500 0,9 q-4.100,.6 -8.200,0 q-.8,-4.500 0,-9 z" fill="#4f9cec"/><ellipse cx="11.500" cy="10.500" rx="4.200" ry="9.800" fill="none" stroke="#bcdcfb" stroke-width=".7"/><path d="M.3,10.500 h22.400 M2,5.600 q9.500,1.200 19,0 M2,15.400 q9.500,-1.200 19,0" fill="none" stroke="#cfe6ff" stroke-width=".8"/><ellipse cx="11.500" cy="10.500" rx="8.400" ry="9.900" fill="none" stroke="#a8d0f8" stroke-width=".6"/><rect x="14.8" y="14.8" width="9.2" height="8.8" rx="1.6" fill="#5a9a5a" stroke="#3a7a3a" stroke-width=".5"/><circle cx="18.6" cy="18.4" r="2" fill="none" stroke="#fff" stroke-width="1.2"/><path d="M20.2,20 l2.4,2.4" stroke="#fff" stroke-width="1.4"/></svg>
<svg style="left:810px;top:57px" width="24" height="24" viewBox="0 0 24 24"><ellipse cx="11.8" cy="10.2" rx="11.6" ry="10" fill="#4d8fd8" stroke="#1f4f94" stroke-width=".8"/><path d="M3,6 q3,-3 6,-1 l1,3 -3,2 -2,3 -2,-3 z M12,3 l5,-.5 3,3 -1,4 -4,1 -2,-3 z M15,12 l4,1 -1,4 -3,-1 z" fill="#2d5a96"/><path d="M.3,10.2 h23 M2.200,5.200 h19.200 M2.200,15.200 h19.200" stroke="#d4e8ff" stroke-width=".7"/><ellipse cx="11.8" cy="10.200" rx="5" ry="10" fill="none" stroke="#d4e8ff" stroke-width=".7"/><path d="M11.8,.2 v20" stroke="#d4e8ff" stroke-width=".7"/><g transform="translate(2,0)"><path d="M8.200,12.800 h3 l.6,1.200 h.4 l.6,-1.200 h3 l4.200,8 h-9 l-.2,-2.500 h-1.600 l-.2,2.500 h-5.200 z" fill="#000"/><ellipse cx="7.300" cy="21" rx="4.300" ry="2.700" fill="#000"/><ellipse cx="16.500" cy="21" rx="4.300" ry="2.700" fill="#000"/><ellipse cx="7.300" cy="21.200" rx="2.700" ry="1.500" fill="#fff"/><ellipse cx="16.500" cy="21.200" rx="2.700" ry="1.500" fill="#fff"/></g></svg>
<svg style="left:25px;top:96px" width="24" height="24" viewBox="0 0 24 24"><rect x="2" y="6.5" width="12" height="12" fill="#d8693a" stroke="#b85424" stroke-width=".6" transform="rotate(-20 8 12.5)"/><rect x="4.5" y="3.4" width="12.5" height="13" fill="#f2c01e" stroke="#c99a10" stroke-width=".6" transform="rotate(-4 10 10)"/><rect x="9" y="1.6" width="13.4" height="13.4" fill="#6b96c8" stroke="#3f6ea8" stroke-width=".7" transform="rotate(10 15.7 8.3)"/><rect x="15.200000000000001" y="15" width="9" height="8.600" rx="1.800" fill="#5b9a5b" stroke="#3f7f3f" stroke-width=".6"/><path d="M19.7,16.5 v5.600 M16.9,19.3 h5.600" stroke="#fff" stroke-width="1.800"/></svg>
<svg style="left:58px;top:96px" width="24" height="24" viewBox="0 0 24 24"><circle cx="12.5" cy="7.6" r="6.9" fill="#7aa3d6" stroke="#4f7ab4" stroke-width=".6"/><path d="M8,4.5 l3,-1.5 2,2 -1,3 -3,1 z M14.5,5 l3,1 .5,3 -2.5,1.5 z M10,10.5 l2.5,.5 v2.5 l-2,-1 z" fill="#35598c"/><path d="M.8,9.4 l11.4,5.8 v9 l-11.4,-5.8 z" fill="#dbb112" stroke="#7a6200" stroke-width=".8" stroke-linejoin="round"/><path d="M12.2,15.2 l11.4,-5.8 v9 l-11.4,5.8 z" fill="#fbf07a" stroke="#7a6200" stroke-width=".8" stroke-linejoin="round"/><path d="M.8,9.4 l3.6,-1.9 M23.6,9.4 l-3.6,-1.9" stroke="#7a6200" stroke-width=".8"/><rect x="15.0" y="15.0" width="9" height="9" rx="1.500" fill="#c8a40a"/><path d="M19.5,19.5 m0,-3.200 v6.400 m-2.800,-4.800 l5.600,3.200 m0,-3.200 l-5.600,3.200" stroke="#fff" stroke-width="1.3" fill="none"/></svg>
<svg style="left:91px;top:96px" width="24" height="24" viewBox="0 0 24 24"><path d="M3.4,2.8 l6.4,14.2 6.6,-14.2 h6" fill="none" stroke="#2f4a62" stroke-width="1.3" stroke-linejoin="round"/><path d="M3.4,.9 l1.9,1.9 -1.9,1.9 -1.9,-1.9 z M16.4,.9 l1.9,1.9 -1.9,1.9 -1.9,-1.9 z M22.4,.9 l1.7,1.9 -1.7,1.9 -1.9,-1.9 z" fill="#fff" stroke="#2f4a62" stroke-width=".9"/><circle cx="9.8" cy="17.2" r="1.8" fill="#fff" stroke="#2f4a62" stroke-width=".9"/><rect x="15.4" y="15.0" width="9" height="9" rx="1.500" fill="#c8a40a"/><path d="M19.9,19.5 m0,-3.200 v6.400 m-2.800,-4.800 l5.600,3.200 m0,-3.200 l-5.600,3.200" stroke="#fff" stroke-width="1.3" fill="none"/></svg>
<svg style="left:124px;top:96px" width="24" height="24" viewBox="0 0 24 24"><path d="M.4,23.600 Q1.500,17 3.200,13.900 Q6,8.500 10,5.200 Q15,1.500 22.600,.3 Q22.800,3 21.800,5.600 Q20.500,8.500 18.800,10.400 Q16,13.500 12.800,15.200 Q9,17.400 4.600,19 Q2,21 .4,23.600 Z" fill="#7ba3d2" stroke="#3a68a4" stroke-width=".8" stroke-linejoin="round"/><path d="M.8,23 Q6,9 21.500,1.500" fill="none" stroke="#2f5a94" stroke-width=".7"/><path d="M9,9.500 l4.500,-1.500 M12,6.500 l4.500,-1.500 M6.500,13 l5,-1.500" stroke="#c4d8ee" stroke-width=".6"/><rect x="14.6" y="15.0" width="9" height="9" rx="1.500" fill="#c8a40a"/><path d="M19.1,19.5 m0,-3.200 v6.400 m-2.800,-4.800 l5.600,3.200 m0,-3.200 l-5.600,3.200" stroke="#fff" stroke-width="1.3" fill="none"/></svg>
<svg style="left:158px;top:96px" width="24" height="24" viewBox="0 0 24 24"><rect x="2.4" y="5.6" width="18" height="10" rx="1.2" fill="#6b96c8" stroke="#2f5a94" stroke-width="1"/><path d="M5.2,1.5 v4 M8.3,1.5 v4 M11.4,1.5 v4 M14.5,1.5 v4 M17.6,1.5 v4 M5.2,15.8 v4 M8.3,15.8 v4 M11.4,15.8 v4 M14.5,15.8 v4" stroke="#2f5a94" stroke-width="1.1"/><rect x="15.0" y="15.0" width="9" height="9" rx="1.500" fill="#c8a40a"/><path d="M19.5,19.5 m0,-3.200 v6.400 m-2.800,-4.800 l5.600,3.200 m0,-3.200 l-5.600,3.200" stroke="#fff" stroke-width="1.3" fill="none"/></svg>
<svg style="left:208px;top:96px" width="24" height="24" viewBox="0 0 24 24"><path d="M11,1 l4,1.800 -8.500,17.600 -4,3 .2,-4.800 z" fill="#e0deda" stroke="#c8c6c2" stroke-width=".6"/><path d="M17,1 l4,1.800 -8.500,17.600 -4,3 .2,-4.800 z" fill="#e4e2de" stroke="#c8c6c2" stroke-width=".6"/><path d="M11,1 l4,1.800 -1,2 -4,-1.800 z M17,1 l4,1.800 -1,2 -4,-1.800 z" fill="#f4f4f4"/></svg>
<svg style="left:240px;top:96px" width="24" height="24" viewBox="0 0 24 24"><path d="M13.500,1 l4.400,2 -8.800,17.800 -4.600,3.200 .2,-5.200 z" fill="#e2e0dc" stroke="#c6c4be" stroke-width=".7"/><path d="M13.500,1 l4.400,2 -1,2 -4.400,-2 z" fill="#f6f6f6" stroke="#cfcfcf" stroke-width=".5"/><path d="M4.700,18.800 l4.400,2 -4.600,3.200 z" fill="#eeeeee" stroke="#cfcfcf" stroke-width=".4"/></svg>
<svg style="left:272px;top:96px" width="24" height="24" viewBox="0 0 24 24"><rect x="1.800" y="1.800" width="19.600" height="19" rx="1.600" fill="#d3d5d9" stroke="#c6c8cc"/><rect x="5.600" y="3.200" width="12" height="6.600" fill="#ececec"/><path d="M7,5 h9 M7,7 h9" stroke="#d0d0d0" stroke-width=".9"/><rect x="6" y="14" width="9" height="6" fill="#e6e6e6"/><rect x="7.400" y="15" width="2" height="3.600" fill="#c6cad0"/><path d="M21,9.500 l3,1.600 -6.600,10.600 -3.600,2.400 .4,-4 z" fill="#dccfca" stroke="#cfc4c0" stroke-width=".5"/></svg>
<svg style="left:305.5px;top:96px" width="24" height="24" viewBox="0 0 24 24"><circle cx="8.2" cy="3.6" r="2.6" fill="#dedcd6" stroke="#cfcdc6" stroke-width=".6"/><circle cx="17.2" cy="5.6" r="2.6" fill="#dedcd6" stroke="#cfcdc6" stroke-width=".6"/><circle cx="1.6" cy="11.6" r="2.6" fill="#dedcd6" stroke="#cfcdc6" stroke-width=".6"/><rect x="10.6" y="13" width="10.6" height="10.6" rx="1.4" fill="#c9c6ba"/><circle cx="15.9" cy="18.3" r="1.9" fill="none" stroke="#f4f4f0" stroke-width="1.1"/><path d="M15.9,14.2 v8.2 M11.8,18.3 h8.2 M13,15.4 l5.8,5.8 M18.8,15.4 l-5.8,5.8" stroke="#f4f4f0" stroke-width=".8"/></svg>
<svg style="left:339px;top:96px" width="24" height="24" viewBox="0 0 24 24"><rect x="3.4" y="1.6" width="4.8" height="4.8" fill="#f6f6f6" stroke="#b0b0b0" stroke-width=".8"/><path d="M4.6,2.8 l2.4,2.4 M7,2.8 l-2.4,2.4" stroke="#b0b0b0" stroke-width=".7"/><path d="M8.4,4 h10.4" stroke="#d4d4d4" stroke-width="1.2"/><path d="M5,6.6 l-4,15.4" stroke="#c8c8c8" stroke-width=".9"/><path d="M9.2,11.4 l9.6,9.4" stroke="#d6d0bc" stroke-width="3"/><path d="M18.4,8.6 l-9.2,11.6" stroke="#d6d0bc" stroke-width="3"/><path d="M7.2,12.6 q2.4,-4 6.2,-2.6 l-2.6,4.4 z" fill="#d9d9d9"/></svg>
<svg style="left:383px;top:96px" width="24" height="24" viewBox="0 0 24 24"><rect x="2" y="2" width="19.6" height="5" fill="#dddbd0" stroke="#d0cec4" stroke-width=".6"/><rect x="2" y="9" width="19.6" height="5" fill="#dddbd0" stroke="#d0cec4" stroke-width=".6"/><rect x="2" y="16" width="19.6" height="5" fill="#dddbd0" stroke="#d0cec4" stroke-width=".6"/><path d="M17.6,.6 l4.2,1.9 -9.4,17.4 -4,2.8 .2,-4.6 z" fill="#ecebe8" stroke="#c9c7c2" stroke-width=".7"/><path d="M17.6,.6 l4.2,1.9 -1,1.9 -4.2,-1.9 z" fill="#fafafa" stroke="#d0d0d0" stroke-width=".5"/></svg>
<svg style="left:416px;top:96px" width="24" height="24" viewBox="0 0 24 24"><path d="M4,6.6 h15.4 l-1,15.6 h-13.4 z" fill="#f4f0f0" stroke="#d6c6c6" stroke-width="1.2"/><path d="M8.2,8.6 v11.6 M11.7,8.6 v11.6 M15.2,8.6 v11.6" stroke="#d8c8c8" stroke-width="1.6"/><path d="M3.4,4.6 h16.6" stroke="#d6c6c6" stroke-width="1.8"/><path d="M9.2,3.6 q2.5,-2.4 5,0" fill="none" stroke="#d6c6c6" stroke-width="1.1"/></svg>
<svg style="left:449px;top:96px" width="24" height="24" viewBox="0 0 24 24"><path d="M1,3 l14,7.6 M1.6,11.2 l13.6,-2.2" stroke="#d4d4d4" stroke-width="2.2" stroke-linecap="round"/><ellipse cx="18.2" cy="6.2" rx="3.2" ry="2.2" fill="none" stroke="#d8c4c4" stroke-width="1.4" transform="rotate(-35 18.2 6.2)"/><ellipse cx="18.2" cy="14.8" rx="3.2" ry="2.2" fill="none" stroke="#d8c4c4" stroke-width="1.4" transform="rotate(40 18.2 14.8)"/></svg>
<svg style="left:482px;top:96px" width="24" height="24" viewBox="0 0 24 24"><path d="M9,1.6 h7 l4,4 v12 h-11 z" fill="#f7f7f7" stroke="#d9d9d9"/><path d="M4,6.6 h7.6 l4,4 v12.2 h-11.6 z" fill="#f9f9f9" stroke="#c9c9c9"/><path d="M11.6,6.6 v4 h4" fill="none" stroke="#c9c9c9"/><path d="M6,13.6 h7 M6,15.8 h7 M6,18 h7 M6,20.2 h7" stroke="#d2d2d2" stroke-width=".9"/></svg>
<svg style="left:515px;top:96px" width="24" height="24" viewBox="0 0 24 24"><rect x="3.6" y="2.4" width="16" height="20.4" rx="1" fill="#efede8" stroke="#d4d0c8"/><rect x="7.6" y="1" width="8" height="3.6" fill="#e0e0e0" stroke="#d0d0d0" stroke-width=".6"/><path d="M6.2,5.8 h7 l3.6,3.6 v10.8 h-10.6 z" fill="#fafafa" stroke="#c8c8c8" stroke-width=".8"/><path d="M8,12 h6.6 M8,14 h6.6 M8,16 h6.6 M8,18 h6.6" stroke="#d0d0d0" stroke-width=".8"/></svg>
<svg style="left:548px;top:96px" width="24" height="24" viewBox="0 0 24 24"><path d="M1.6,9 l8,-7.6 v4.6 q10,-.4 10.4,7.4 q.2,6.4 -7.6,7.2 q-2.4,0 -2.2,-2.2 q4.4,-.4 4.4,-3.8 q-.2,-3.2 -5,-3.2 v5 z" fill="#dcd6d0" stroke="#d4cec8" stroke-width=".5"/></svg>
<svg style="left:614px;top:96px" width="24" height="24" viewBox="0 0 24 24"><path d="M5.6,3.6 h15.4 v10.2 h-15.4 l-4.6,-5.1 z" fill="#deddd5" stroke="#d2d1c8" stroke-width=".6"/><text x="5.6" y="12.4" font-family="Liberation Sans" font-weight="bold" font-size="9.5" fill="#f4f4f0" stroke="#c4c4c4" stroke-width=".3">abc</text></svg>
<svg style="left:686px;top:96px" width="24" height="24" viewBox="0 0 24 24"><path d="M11,1.2 q-5.2,0 -5.2,3.4 v2.8 h5.6 v1 h-7.8 q-3.4,0 -3.4,4.6 q0,4.6 3.4,4.6 h2 v-3 q0,-3 3.2,-3 h5 q2.6,0 2.6,-2.8 v-4.2 q0,-3.4 -5.4,-3.4 z" fill="#3b78aa"/><circle cx="8.4" cy="4" r="1" fill="#fff"/><path d="M12.6,22.8 q5.2,0 5.2,-3.4 v-2.8 h-5.6 v-1 h7.8 q3.4,0 3.4,-4.6 q0,-4.6 -3.4,-4.6 h-2 v3 q0,3 -3.2,3 h-5 q-2.6,0 -2.6,2.8 v4.2 q0,3.4 5.4,3.4 z" fill="#fdd340" transform="translate(-2.6,.6)"/><circle cx="12.8" cy="20.6" r="1" fill="#fff"/><path d="M14.6,16.8 l6.6,2.6 -6.6,2.8" fill="none" stroke="#333" stroke-width="1.2"/><path d="M11,18.2 h3" stroke="#fff" stroke-width=".8"/></svg>
<svg style="left:719px;top:96px" width="24" height="24" viewBox="0 0 24 24"><path d="M5.4,.8 l.6,3 -2.2,-.8 1.8,2 -2,1.4 1.4,2.2 1,4.2 -3.2,1.4 -1,2.4 2.6,2 .6,-.8 -1.6,-1.4 3.4,-.6 3.4,1.4 5,.6 2.4,2.4 2.6,3 2.4,.2 -3.6,-4.4 -1.2,-3.4 q-.6,-3 -4.4,-3.4 l-5,-.6 -1.8,-3.6 1.6,-.8 -.6,-1.2 -1.6,-.2 -.4,-2.4 1,-1.4 -1.2,.8 z" fill="#000"/></svg>
<svg style="left:752px;top:96px" width="24" height="24" viewBox="0 0 24 24"><path d="M1,17 l5.6,-9.6 2.4,6 6.6,-13" fill="none" stroke="#3b7ae0" stroke-width="1" stroke-dasharray="2 .9"/><path d="M17.6,6.6 l3.6,2 -7.4,12 -3.4,2.4 .4,-4.2 z" fill="#f1c93a" stroke="#b8941a" stroke-width=".7"/><path d="M17.6,6.6 l3.6,2 -.9,1.5 -3.6,-2 z" fill="#ddd" stroke="#999" stroke-width=".5"/><path d="M10.8,18.8 l3,1.8 -3.4,2.4 z" fill="#ccc" stroke="#888" stroke-width=".4"/></svg>
<svg style="left:785.5px;top:96px" width="24" height="24" viewBox="0 0 24 24"><path d="M2,22.6 q8,-1.2 17,0" stroke="#ccc" stroke-width="1" fill="none"/><path d="M11.6,8 l2.6,1.6 -9,13 q-1.8,.8 -2.8,-.8 z" fill="#f0bc18" stroke="#c8960a" stroke-width=".6"/><path d="M8,3.2 q5,-3.6 11,-.4 l3,2.8 -1.6,2.4 -2.2,-1.8 -2.6,.6 -1.6,2.8 -2.6,-1.6 1.2,-2.6 q-1.6,-2.4 -4.6,-2.2 z" fill="#d0d0d0" stroke="#7a7a7a" stroke-width=".7"/></svg>
<svg style="left:818px;top:96px" width="24" height="24" viewBox="0 0 24 24"><ellipse cx="12.6" cy="22.900" rx="6.500" ry=".8" fill="#d4d4d4"/><path d="M13.6,21.200 A9.500,9.500 0 1 0 3.100,11.600 L.3,11.600 L5.700,18 L11.100,11.600 L8.800,11.600 A3.800,3.800 0 1 1 12,15.400 Z" fill="#4a90e8" stroke="#3a7fd8" stroke-width=".5" stroke-linejoin="round"/><path d="M13,2.100 a9.500,9.500 0 0 1 9.100,9.500 h-5.700 a3.800,3.800 0 0 0 -3.800,-3.800 z" fill="#8cc0f8" opacity=".5"/></svg>
<svg style="left:863px;top:96px" width="24" height="24" viewBox="0 0 24 24"><text x="-.6" y="10.8" font-family="Liberation Sans" font-weight="bold" font-size="14" fill="#000">W</text><text x="6.2" y="17.8" font-family="Liberation Sans" font-weight="bold" font-size="14" fill="#f00">K</text><text x="14.4" y="22.6" font-family="Liberation Sans" font-weight="bold" font-size="12" fill="#000">T</text></svg>
<svg style="left:943.5px;top:96px" width="24" height="24" viewBox="0 0 24 24"><rect x="2.4" y="1.6" width="19.400" height="20.400" fill="#6b96c8" stroke="#2b3a4c" stroke-width="1"/><rect x="2.900" y="2.100" width="4" height="19.400" fill="#33465c"/><text x="10.600" y="17" font-family="Liberation Serif" font-size="15" fill="#fff">?</text></svg>
<!-- browser dock -->
<div class="t" style="left:13px;top:131px;transform:scaleX(0.925);transform-origin:0 0;">Browser</div>
<svg style="left:209px;top:132px" width="11" height="11" viewBox="0 0 11 11"><rect x=".5" y=".5" width="10" height="10" rx="2" fill="#f6f6f6" stroke="#6e6e6e"/><rect x="2.5" y="4.5" width="4" height="4" fill="none" stroke="#555" stroke-width=".9"/><path d="M4.5,4.3 v-1.800 h4 v4 h-1.800" fill="none" stroke="#555" stroke-width=".9"/></svg>
<svg style="left:223px;top:132px" width="11" height="11" viewBox="0 0 11 11"><rect x=".5" y=".5" width="10" height="10" rx="2" fill="#f6f6f6" stroke="#6e6e6e"/><path d="M3,3 l5,5 M8,3 l-5,5" stroke="#444" stroke-width="1.700"/></svg>
<svg style="left:16px;top:154px" width="16" height="16" viewBox="0 0 16 16"><rect x="1.500" y="1.500" width="11" height="11" fill="#fff" stroke="#707070"/><circle cx="12.500" cy="12.500" r="2.600" fill="#9fd49f" stroke="#3f8f3f"/></svg>
<svg style="left:41px;top:154px" width="16" height="16" viewBox="0 0 16 16"><path d="M13.500,6 a6,6 0 0 0 -10.500,-2 l-1.500,-1.500 v5 h5 l-1.800,-1.800 a3.500,3.500 0 0 1 6,.9 z M2.500,10 a6,6 0 0 0 10.500,2 l1.500,1.500 v-5 h-5 l1.800,1.800 a3.500,3.500 0 0 1 -6,-.9 z" fill="#4a90dc" stroke="#2f6ab8" stroke-width=".5"/></svg>
<svg style="left:66px;top:154px" width="16" height="16" viewBox="0 0 16 16"><path d="M1.500,3.500 h13 l-5,6 v5.500 l-3,-1.500 v-4 z" fill="#5b8fcf" stroke="#3f6ea8" stroke-width=".6"/><rect x=".8" y="1" width="14.400" height="2.800" rx=".8" fill="#f3d33a" stroke="#c8a410" stroke-width=".6"/></svg>
<svg style="left:91px;top:154px" width="16" height="16" viewBox="0 0 16 16"><path d="M2.800,1.500 v11 M2.800,1.500 h3.500 M2.800,6.800 h2 M2.800,12.300 h2" stroke="#9a9a9a" stroke-width=".9" fill="none"/><rect x="4.300" y="5.300" width="3" height="3" fill="#f8a838" stroke="#d88418" stroke-width=".5"/><rect x="4.300" y="10.800" width="3" height="3" fill="#f8a838" stroke="#d88418" stroke-width=".5"/><path d="M8.200,15.400 h4.200 v-8.400 h2.800 l-4.900,-6.300 -4.900,6.300 h2.800 z" fill="#4a82c4" stroke="#27486f" stroke-width=".8" stroke-linejoin="round"/></svg>
<svg style="left:116px;top:154px" width="16" height="16" viewBox="0 0 16 16"><circle cx="8" cy="8" r="7.300" fill="#6b96c8" stroke="#4a7ab0" stroke-width=".6"/><circle cx="8.800" cy="4.300" r="1.200" fill="#fff"/><path d="M6.300,7 l3,-.4 -1.300,5 1.400,-.2 -.2,.8 -3.200,.4 1.300,-4.900 -1.200,.1 z" fill="#fff"/></svg>
<div class="a" style="left:8px;top:178px;width:228px;height:226px;background:#fff;border:1px solid #c3c3c3;border-color:#b4b4b4 #c3c3c3 #c3c3c3 #c8c8c8"></div>
<div class="a" style="left:9px;top:179px;width:212px;height:210px;overflow:hidden">
<svg style="left:7px;top:7.0px" width="8" height="5" viewBox="0 0 8 5"><path d="M0,0 h8 l-4,4.500 z" fill="#505050"/></svg>
<svg style="left:23px;top:0.5px" width="16" height="16" viewBox="0 0 16 16"><path d="M8,.8 l2.200,4.900 5.200,.6 -3.900,3.500 1.100,5.200 -4.600,-2.700 -4.600,2.700 1.100,-5.200 -3.900,-3.500 5.200,-.6 z" fill="#fff27a" stroke="#d8b400" stroke-width="1" stroke-linejoin="round"/></svg>
<div class="t" style="left:45.5px;top:3.0px;transform:scaleX(0.936);transform-origin:0 0;">Favorites</div>
<svg style="left:28px;top:23.5px" width="5" height="8" viewBox="0 0 5 8"><path d="M0,0 v8 l4.500,-4 z" fill="#505050"/></svg>
<svg style="left:44px;top:20.5px" width="15" height="13" viewBox="0 0 15 13"><path d="M.5,12.500 v-11 q0,-1 1,-1 h4 q.8,0 1.100,.8 l.4,1.200 h6.500 q1,0 1,1 v9 z" fill="#ededed" stroke="#8a8a8a"/></svg>
<div class="t" style="left:65.2px;top:21.0px;letter-spacing:-0.03px;">C:\Users\ujaval\Downloads</div>
<svg style="left:28px;top:41.5px" width="5" height="8" viewBox="0 0 5 8"><path d="M0,0 v8 l4.500,-4 z" fill="#505050"/></svg>
<svg style="left:44px;top:38.5px" width="15" height="13" viewBox="0 0 15 13"><path d="M.5,12.500 v-11 q0,-1 1,-1 h4 q.8,0 1.100,.8 l.4,1.200 h6.500 q1,0 1,1 v9 z" fill="#ededed" stroke="#8a8a8a"/></svg>
<div class="t" style="left:65.2px;top:39.0px;letter-spacing:0.04px;">C:\Users\ujaval\Downloads\</div>
<svg style="left:8px;top:59.5px" width="5" height="8" viewBox="0 0 5 8"><path d="M0,0 v8 l4.500,-4 z" fill="#505050"/></svg>
<svg style="left:24px;top:56.5px" width="15" height="13" viewBox="0 0 15 13"><path d="M.5,12.500 v-12 h5 l1.500,2 h7.500 v10 z" fill="#a5d86a" stroke="#8a8a8a"/><path d="M1,9 l12,-6 M3,1 l6,11" stroke="#e8f8d0" stroke-width="1.200"/><path d="M8.500,3.500 h4.500 v3.500 l-3,1.500 z" fill="#2f8f2f"/></svg>
<div class="t" style="left:45.5px;top:57.0px;letter-spacing:-0.06px;">Project Home</div>
<svg style="left:8px;top:77.5px" width="5" height="8" viewBox="0 0 5 8"><path d="M0,0 v8 l4.500,-4 z" fill="#505050"/></svg>
<svg style="left:24px;top:74.5px" width="15" height="13" viewBox="0 0 15 13"><path d="M.5,12.500 v-12 h5 l1.500,2 h7.500 v10 z" fill="#f4f4f4" stroke="#8a8a8a"/><path d="M4,8 l3.500,-3.500 3.500,3.500 M5,7.500 v3.500 h5 v-3.500" fill="none" stroke="#333" stroke-width="1"/></svg>
<div class="t" style="left:45.5px;top:75.0px;letter-spacing:0.09px;">Home</div>
<svg style="left:8px;top:95.5px" width="5" height="8" viewBox="0 0 5 8"><path d="M0,0 v8 l4.500,-4 z" fill="#505050"/></svg>
<svg style="left:24px;top:92.5px" width="15" height="13" viewBox="0 0 15 13"><path d="M.5,12.500 v-11 q0,-1 1,-1 h4 q.8,0 1.100,.8 l.4,1.200 h6.500 q1,0 1,1 v9 z" fill="#ededed" stroke="#8a8a8a"/></svg>
<div class="t" style="left:45.5px;top:93.0px;letter-spacing:0.08px;">C:\</div>
<svg style="left:24px;top:110.5px" width="15" height="13" viewBox="0 0 15 13"><path d="M.5,12.500 v-7.500 h14 v7.500 z" fill="#ededed" stroke="#8a8a8a"/><path d="M1,.8 h5.500 l1.500,1.700 h6 M1,3.200 h13" fill="none" stroke="#8a8a8a" stroke-width="1.300"/></svg>
<div class="t" style="left:45.5px;top:111.0px;letter-spacing:0.39px;">Q:\</div>
<svg style="left:23px;top:126.5px" width="16" height="16" viewBox="0 0 16 16"><circle cx="8" cy="5" r="4.500" fill="#7aa3d6" stroke="#4f7ab4" stroke-width=".6"/><path d="M5.500,3 l2,-1 1.500,1.500 -1,2 -2,.5 z M9.500,4 l2,.6 v2 l-1.800,.6 z" fill="#35598c"/><path d="M.6,6.500 l7.400,3.800 v5.400 l-7.400,-3.800 z" fill="#dbb112" stroke="#7a6200" stroke-width=".7" stroke-linejoin="round"/><path d="M8,10.300 l7.400,-3.800 v5.400 l-7.400,3.800 z" fill="#fbf07a" stroke="#7a6200" stroke-width=".7" stroke-linejoin="round"/></svg>
<div class="t" style="left:45.5px;top:129.0px;transform:scaleX(0.932);transform-origin:0 0;">GeoPackage</div>
<svg style="left:23px;top:144.5px" width="16" height="16" viewBox="0 0 16 16"><path d="M.8,15.500 q1,-7.500 5.500,-11.500 q4,-3.500 9,-3.700 q.4,4.500 -2.500,7.700 q-3.500,3.700 -8.600,4.200 q-1.800,1.500 -2.400,3.300 z" fill="#8fb0d8" stroke="#3a68a4" stroke-width=".7"/><path d="M1.200,15 q3,-8 12.500,-13.500" fill="none" stroke="#2f5a94" stroke-width=".6"/></svg>
<div class="t" style="left:45.5px;top:147.0px;letter-spacing:-0.3px;">SpatiaLite</div>
<svg style="left:23px;top:162.5px" width="16" height="16" viewBox="0 0 16 16"><path d="M3,1.500 q5,-2 10,0 q3,2.500 1,7 q-1,2.500 -2.500,2.500 l-.5,4 q-2.500,.8 -3,-1.500 l-.3,-3.500 q-2.500,1.500 -5,-1.500 q-2.500,-4 .3,-7 z" fill="#4a76b0" stroke="#1f3f70" stroke-width=".8"/><circle cx="10.500" cy="5" r=".8" fill="#fff"/><path d="M6,3 q1,4 .5,8 M10,10 q1,1 2,.5" fill="none" stroke="#cfe0f4" stroke-width=".7"/></svg>
<div class="t" style="left:45.5px;top:165.0px;transform:scaleX(0.884);transform-origin:0 0;">PostGIS</div>
<svg style="left:23px;top:180.5px" width="16" height="16" viewBox="0 0 16 16"><path d="M1,1 q7,0 14,6 q-6,2 -9,8 q-2,0 -5,-1 q4,-3 4,-6.500 q0,-3.500 -4,-6.500 z" fill="#6b96c8" stroke="#34609a" stroke-width=".7"/><path d="M3.500,2 q4,5 1,12 M6.500,3 q3.500,4 1,10 M9.500,4.500 q2,3 .5,6" fill="none" stroke="#d4e4f6" stroke-width=".7"/></svg>
<div class="t" style="left:45.5px;top:183.0px;transform:scaleX(0.883);transform-origin:0 0;">MSSQL</div>
<svg style="left:23px;top:198.5px" width="16" height="16" viewBox="0 0 16 16"><rect x="1" y="2.500" width="14" height="12" rx="4" fill="#6b96c8" stroke="#2b4a78" stroke-width="1"/></svg>
<div class="t" style="left:45.5px;top:201.0px;letter-spacing:-0.37px;">Oracle</div>
</div>
<div class="a" style="left:221px;top:178px;width:15px;height:212px;background:#c3c3c3"></div>
<div class="a" style="left:222px;top:179px;width:13px;height:13px;background:linear-gradient(90deg,#f4f4f4,#fdfdfd)"></div>
<div class="a" style="left:222px;top:193px;width:13px;height:91px;background:linear-gradient(90deg,#f3f3f3,#fcfcfc)"></div>
<div class="a" style="left:222px;top:285px;width:13px;height:90px;background:#e3e3e3"></div>
<div class="a" style="left:222px;top:376px;width:13px;height:13px;background:linear-gradient(90deg,#f4f4f4,#fdfdfd)"></div>
<svg style="left:225px;top:183px" width="7" height="4" viewBox="0 0 7 4"><path d="M0,4 h7 l-3.500,-4 z" fill="#555"/></svg>
<svg style="left:225px;top:380.5px" width="7" height="4" viewBox="0 0 7 4"><path d="M0,0 h7 l-3.500,4 z" fill="#555"/></svg>
<div class="a" style="left:9px;top:389px;width:226px;height:15px;background:#c3c3c3"></div>
<div class="a" style="left:9px;top:390px;width:13px;height:13px;background:linear-gradient(#f4f4f4,#fdfdfd)"></div>
<div class="a" style="left:23px;top:390px;width:132px;height:13px;background:linear-gradient(#f3f3f3,#fcfcfc)"></div>
<div class="a" style="left:156px;top:390px;width:51px;height:13px;background:#e3e3e3"></div>
<div class="a" style="left:208px;top:390px;width:13px;height:13px;background:linear-gradient(#f4f4f4,#fdfdfd)"></div>
<div class="a" style="left:222px;top:390px;width:13px;height:13px;background:#f2f2f2"></div>
<svg style="left:13px;top:393px" width="4" height="7" viewBox="0 0 4 7"><path d="M4,0 v7 l-4,-3.500 z" fill="#555"/></svg>
<svg style="left:213px;top:393px" width="4" height="7" viewBox="0 0 4 7"><path d="M0,0 v7 l4,-3.500 z" fill="#555"/></svg>
<div class="a" style="left:116px;top:407px;width:1px;height:1px;background:#fff"></div><div class="a" style="left:115px;top:406px;width:1px;height:1px;background:#b4b4b4"></div>
<div class="a" style="left:119px;top:407px;width:1px;height:1px;background:#fff"></div><div class="a" style="left:118px;top:406px;width:1px;height:1px;background:#b4b4b4"></div>
<div class="a" style="left:122px;top:407px;width:1px;height:1px;background:#fff"></div><div class="a" style="left:121px;top:406px;width:1px;height:1px;background:#b4b4b4"></div>
<div class="a" style="left:125px;top:407px;width:1px;height:1px;background:#fff"></div><div class="a" style="left:124px;top:406px;width:1px;height:1px;background:#b4b4b4"></div>
<div class="a" style="left:128px;top:407px;width:1px;height:1px;background:#fff"></div><div class="a" style="left:127px;top:406px;width:1px;height:1px;background:#b4b4b4"></div>
<div class="a" style="left:131px;top:407px;width:1px;height:1px;background:#fff"></div><div class="a" style="left:130px;top:406px;width:1px;height:1px;background:#b4b4b4"></div>
<!-- layers dock -->
<div class="t" style="left:13px;top:413px;transform:scaleX(0.888);transform-origin:0 0;">Layers</div>
<svg style="left:208.5px;top:413.5px" width="11" height="11" viewBox="0 0 11 11"><rect x=".5" y=".5" width="10" height="10" rx="2" fill="#f6f6f6" stroke="#6e6e6e"/><rect x="2.5" y="4.5" width="4" height="4" fill="none" stroke="#555" stroke-width=".9"/><path d="M4.5,4.3 v-1.800 h4 v4 h-1.800" fill="none" stroke="#555" stroke-width=".9"/></svg>
<svg style="left:222.5px;top:413.5px" width="11" height="11" viewBox="0 0 11 11"><rect x=".5" y=".5" width="10" height="10" rx="2" fill="#f6f6f6" stroke="#6e6e6e"/><path d="M3,3 l5,5 M8,3 l-5,5" stroke="#444" stroke-width="1.700"/></svg>
<svg style="left:16px;top:436px" width="16" height="16" viewBox="0 0 16 16"><path d="M1,8 l5,-3 5,6 -4,3 z" fill="#e8b820" stroke="#a87808" stroke-width=".5"/><path d="M1,8 l2,-1.200 4.500,6.500 -.5,.7 z" fill="#d83a2a"/><path d="M6,5 l2,-1.200 5,6 -2,1.200 z" fill="#4a7ac8"/><path d="M9,7.500 l6,-6" stroke="#c8a070" stroke-width="2"/></svg>
<svg style="left:41px;top:436px" width="16" height="16" viewBox="0 0 16 16"><rect x="2" y="4.500" width="8" height="9" fill="#f4f4f4" stroke="#707070"/><rect x="4.500" y="2" width="8" height="9" fill="#f4f4f4" stroke="#707070"/><path d="M8.500,.5 v9" stroke="#555" stroke-width="1.200"/><circle cx="11.500" cy="12.500" r="2.800" fill="#8fd08f" stroke="#3f8f3f" stroke-width=".7"/></svg>
<svg style="left:66px;top:436px" width="18" height="16" viewBox="0 0 18 16"><path d="M.8,8 q7.500,-8 15,0 q-7.500,7 -15,0 z" fill="#f4f4f4" stroke="#8a8a8a" stroke-width="1"/><circle cx="8.300" cy="7.800" r="3.300" fill="#6b96c8" stroke="#3a5f94" stroke-width=".7"/><circle cx="8.300" cy="7.800" r="1.300" fill="#1f2f4f"/><path d="M2.500,4 l-1.500,-1.500 M5.500,2.300 l-.8,-1.800 M14,4 l1.500,-1.500" stroke="#999" stroke-width=".7"/><path d="M12,13 h5 l-2.500,2.600 z" fill="#444"/></svg>
<svg style="left:91px;top:436px" width="16" height="16" viewBox="0 0 16 16"><path d="M1.500,3.500 h13 l-5,6 v5.500 l-3,-1.500 v-4 z" fill="#5b8fcf" stroke="#3f6ea8" stroke-width=".6"/><rect x=".8" y="1" width="14.400" height="2.800" rx=".8" fill="#f3d33a" stroke="#c8a410" stroke-width=".6"/></svg>
<svg style="left:117px;top:436px" width="16" height="16" viewBox="0 0 16 16"><path d="M6.600,2.600 q-.9,-1.900 -3,-1.600 q-2.100,.4 -1.900,2.300 q.3,1.700 2.600,1.700 q-3,.1 -3.100,2.500 q0,2.600 2.900,2.600 q1.900,0 2.700,-1.600" fill="none" stroke="#bdbdc4" stroke-width="1.100"/><path d="M7.500,8.500 h6 v5 l-1.500,1.500 v-3.500 h-3 v3.500 l-1.500,-1.500 z" fill="#e4e4e4" stroke="#d0d0d0" stroke-width=".5"/></svg>
<svg style="left:138px;top:442.5px" width="8" height="5" viewBox="0 0 8 5"><path d="M0,0 h8 l-4,4.500 z" fill="#a8a8a8"/></svg>
<svg style="left:153px;top:436px" width="16" height="16" viewBox="0 0 16 16"><path d="M2.800,1.500 v11 M2.800,1.500 h3.500 M2.800,6.800 h2 M2.800,12.300 h2" stroke="#9a9a9a" stroke-width=".9" fill="none"/><rect x="4.300" y="5.300" width="3" height="3" fill="#f8a838" stroke="#d88418" stroke-width=".5"/><rect x="4.300" y="10.800" width="3" height="3" fill="#f8a838" stroke="#d88418" stroke-width=".5"/><path d="M8.200,.8 h4.200 v8.400 h2.800 l-4.900,6.300 -4.900,-6.300 h2.800 z" fill="#4a82c4" stroke="#27486f" stroke-width=".8" stroke-linejoin="round"/></svg>
<svg style="left:178px;top:436px" width="16" height="16" viewBox="0 0 16 16"><path d="M2.800,1.500 v11 M2.800,1.500 h3.500 M2.800,6.800 h2 M2.800,12.300 h2" stroke="#9a9a9a" stroke-width=".9" fill="none"/><rect x="4.300" y="5.300" width="3" height="3" fill="#f8a838" stroke="#d88418" stroke-width=".5"/><rect x="4.300" y="10.800" width="3" height="3" fill="#f8a838" stroke="#d88418" stroke-width=".5"/><path d="M8.200,15.400 h4.200 v-8.400 h2.800 l-4.900,-6.300 -4.900,6.300 h2.800 z" fill="#4a82c4" stroke="#27486f" stroke-width=".8" stroke-linejoin="round"/></svg>
<svg style="left:203px;top:436px" width="16" height="16" viewBox="0 0 16 16"><rect x="1.500" y="1.500" width="11" height="11" fill="#ececec" stroke="#7a7a7a"/><rect x="9" y="10.500" width="6.500" height="4.500" rx="1" fill="#fff" stroke="#e03a3a" stroke-width="1.200"/><path d="M10.500,12.800 h3.500" stroke="#e03a3a" stroke-width="1"/></svg>
<div class="a" style="left:8px;top:460px;width:228px;height:218px;background:#fff;border:1px solid #c3c3c3;border-color:#b4b4b4 #c3c3c3 #c3c3c3 #c8c8c8"></div>
<div class="a" style="left:9px;top:461px;width:212px;height:19px;background:#f0f0f0"></div>
<svg style="left:15px;top:468.0px" width="8" height="5" viewBox="0 0 8 5"><path d="M0,0 h8 l-4,4.500 z" fill="#5a5a5a"/></svg>
<svg style="left:32px;top:464.0px" width="13" height="13" viewBox="0 0 13 13"><rect x=".5" y=".5" width="12" height="12" fill="#fff" stroke="#a3a3a3"/><path d="M2.800,6.300 l2.500,3.300 4.700,-6.800" fill="none" stroke="#000" stroke-width="1.900"/></svg>
<svg style="left:54px;top:464.0px" width="13" height="13" viewBox="0 0 12 12" shape-rendering="crispEdges"><rect x="0" y="0" width="3" height="3" fill="#27467c"/><rect x="3" y="0" width="3" height="3" fill="#ffffff"/><rect x="6" y="0" width="3" height="3" fill="#a9c9f0"/><rect x="9" y="0" width="3" height="3" fill="#2f558f"/><rect x="0" y="3" width="3" height="3" fill="#ffffff"/><rect x="3" y="3" width="3" height="3" fill="#3f6cae"/><rect x="6" y="3" width="3" height="3" fill="#5e8fd2"/><rect x="9" y="3" width="3" height="3" fill="#8fb6ea"/><rect x="0" y="6" width="3" height="3" fill="#8fb6ea"/><rect x="3" y="6" width="3" height="3" fill="#5e8fd2"/><rect x="6" y="6" width="3" height="3" fill="#a9c9f0"/><rect x="9" y="6" width="3" height="3" fill="#ffffff"/><rect x="0" y="9" width="3" height="3" fill="#27467c"/><rect x="3" y="9" width="3" height="3" fill="#8fb6ea"/><rect x="6" y="9" width="3" height="3" fill="#dfeafa"/><rect x="9" y="9" width="3" height="3" fill="#ffffff"/></svg>
<div class="t b" style="left:74px;top:463.7px;letter-spacing:-0.08px;"><span style="text-decoration:underline">raster_water</span></div>
<div class="a" style="left:52px;top:479.5px;width:16px;height:16px;background:#000"></div>
<div class="t" style="left:73px;top:481.5px">0</div>
<div class="t" style="left:73px;top:499.5px">1</div>
<svg style="left:15px;top:522.0px" width="8" height="5" viewBox="0 0 8 5"><path d="M0,0 h8 l-4,4.500 z" fill="#5a5a5a"/></svg>
<svg style="left:32px;top:518.0px" width="13" height="13" viewBox="0 0 13 13"><rect x=".5" y=".5" width="12" height="12" fill="#fff" stroke="#a3a3a3"/><path d="M2.800,6.300 l2.500,3.300 4.700,-6.800" fill="none" stroke="#000" stroke-width="1.900"/></svg>
<svg style="left:54px;top:518.0px" width="13" height="13" viewBox="0 0 12 12" shape-rendering="crispEdges"><rect x="0" y="0" width="3" height="3" fill="#26364f"/><rect x="3" y="0" width="3" height="3" fill="#ffffff"/><rect x="6" y="0" width="3" height="3" fill="#b4c4dc"/><rect x="9" y="0" width="3" height="3" fill="#33455f"/><rect x="0" y="3" width="3" height="3" fill="#ffffff"/><rect x="3" y="3" width="3" height="3" fill="#4a5f80"/><rect x="6" y="3" width="3" height="3" fill="#6e86ac"/><rect x="9" y="3" width="3" height="3" fill="#93a6c4"/><rect x="0" y="6" width="3" height="3" fill="#93a6c4"/><rect x="3" y="6" width="3" height="3" fill="#6e86ac"/><rect x="6" y="6" width="3" height="3" fill="#b4c4dc"/><rect x="9" y="6" width="3" height="3" fill="#ffffff"/><rect x="0" y="9" width="3" height="3" fill="#26364f"/><rect x="3" y="9" width="3" height="3" fill="#93a6c4"/><rect x="6" y="9" width="3" height="3" fill="#e4e9f0"/><rect x="9" y="9" width="3" height="3" fill="#ffffff"/></svg>
<div class="t b" style="left:74px;top:517.7px;letter-spacing:-0.22px;"><span>raster_protected_regions</span></div>
<div class="a" style="left:52px;top:533.5px;width:16px;height:16px;background:#000"></div>
<div class="t" style="left:73px;top:535.5px">0</div>
<div class="t" style="left:73px;top:553.5px">1</div>
<svg style="left:15px;top:576.0px" width="8" height="5" viewBox="0 0 8 5"><path d="M0,0 h8 l-4,4.500 z" fill="#5a5a5a"/></svg>
<svg style="left:32px;top:572.0px" width="13" height="13" viewBox="0 0 13 13"><rect x=".5" y=".5" width="12" height="12" fill="#fff" stroke="#a3a3a3"/><path d="M2.800,6.300 l2.500,3.300 4.700,-6.800" fill="none" stroke="#000" stroke-width="1.900"/></svg>
<svg style="left:54px;top:572.0px" width="13" height="13" viewBox="0 0 12 12" shape-rendering="crispEdges"><rect x="0" y="0" width="3" height="3" fill="#26364f"/><rect x="3" y="0" width="3" height="3" fill="#ffffff"/><rect x="6" y="0" width="3" height="3" fill="#b4c4dc"/><rect x="9" y="0" width="3" height="3" fill="#33455f"/><rect x="0" y="3" width="3" height="3" fill="#ffffff"/><rect x="3" y="3" width="3" height="3" fill="#4a5f80"/><rect x="6" y="3" width="3" height="3" fill="#6e86ac"/><rect x="9" y="3" width="3" height="3" fill="#93a6c4"/><rect x="0" y="6" width="3" height="3" fill="#93a6c4"/><rect x="3" y="6" width="3" height="3" fill="#6e86ac"/><rect x="6" y="6" width="3" height="3" fill="#b4c4dc"/><rect x="9" y="6" width="3" height="3" fill="#ffffff"/><rect x="0" y="9" width="3" height="3" fill="#26364f"/><rect x="3" y="9" width="3" height="3" fill="#93a6c4"/><rect x="6" y="9" width="3" height="3" fill="#e4e9f0"/><rect x="9" y="9" width="3" height="3" fill="#ffffff"/></svg>
<div class="t b" style="left:74px;top:571.7px;transform:scaleX(0.928);transform-origin:0 0;"><span>raster_roads</span></div>
<div class="a" style="left:52px;top:587.5px;width:16px;height:16px;background:#000"></div>
<div class="t" style="left:73px;top:589.5px">0</div>
<div class="t" style="left:73px;top:607.5px">1</div>
<svg style="left:32px;top:626.0px" width="13" height="13" viewBox="0 0 13 13"><rect x=".5" y=".5" width="12" height="12" fill="#fff" stroke="#a3a3a3"/><path d="M2.800,6.300 l2.500,3.300 4.700,-6.800" fill="none" stroke="#000" stroke-width="1.900"/></svg>
<div class="a" style="left:52px;top:632.5px;width:16px;height:1px;background:#f0c878"></div>
<div class="t b" style="left:74px;top:625.7px;transform:scaleX(0.899);transform-origin:0 0;">roads</div>
<svg style="left:32px;top:644.0px" width="13" height="13" viewBox="0 0 13 13"><rect x=".5" y=".5" width="12" height="12" fill="#fff" stroke="#a3a3a3"/><path d="M2.800,6.300 l2.500,3.300 4.700,-6.800" fill="none" stroke="#000" stroke-width="1.900"/></svg>
<div class="a" style="left:52px;top:641.5px;width:16px;height:16px;background:#a6cee3;border:1px solid #6f8fa0"></div>
<div class="t b" style="left:74px;top:643.7px;letter-spacing:-0.37px;">water_polygons</div>
<svg style="left:32px;top:662.0px" width="13" height="13" viewBox="0 0 13 13"><rect x=".5" y=".5" width="12" height="12" fill="#fff" stroke="#a3a3a3"/><path d="M2.800,6.300 l2.500,3.300 4.700,-6.800" fill="none" stroke="#000" stroke-width="1.900"/></svg>
<div class="a" style="left:52px;top:659.5px;width:16px;height:16px;background:#74a474;border:1px solid #4f7a4f"></div>
<div class="t b" style="left:74px;top:661.7px;letter-spacing:-0.19px;">protected_regions</div>
<div class="a" style="left:221px;top:460px;width:15px;height:218px;background:#c3c3c3"></div>
<div class="a" style="left:222px;top:461px;width:13px;height:13px;background:linear-gradient(90deg,#f4f4f4,#fdfdfd)"></div>
<div class="a" style="left:222px;top:475px;width:13px;height:161px;background:linear-gradient(90deg,#f3f3f3,#fcfcfc)"></div>
<div class="a" style="left:222px;top:637px;width:13px;height:26px;background:#e3e3e3"></div>
<div class="a" style="left:222px;top:664px;width:13px;height:13px;background:linear-gradient(90deg,#f4f4f4,#fdfdfd)"></div>
<svg style="left:225px;top:465px" width="7" height="4" viewBox="0 0 7 4"><path d="M0,4 h7 l-3.500,-4 z" fill="#555"/></svg>
<svg style="left:225px;top:668.5px" width="7" height="4" viewBox="0 0 7 4"><path d="M0,0 h7 l-3.500,4 z" fill="#555"/></svg>
<div class="a" style="left:12px;top:681px;width:200px;height:22px;background:#fff;border:1px solid #ababab;border-radius:3px"></div>
<svg style="left:20px;top:686px" width="13" height="13" viewBox="0 0 13 13"><circle cx="5" cy="5" r="3.800" fill="none" stroke="#8a8a8a" stroke-width="1.300"/><path d="M7.800,7.800 l4,4" stroke="#8a8a8a" stroke-width="1.500"/></svg>
<div class="t" style="left:40px;top:685.500px;color:#7a7a7a;transform:scaleX(0.929);transform-origin:0 0;">Type to locate (Ctrl+K)</div>
<!-- map canvas -->
<div class="a" style="left:242px;top:128px;width:462px;height:550px;background:#fafafa"></div>
<svg id="map" style="left:243px;top:129px" width="460" height="548" viewBox="243 129 460 548" shape-rendering="crispEdges">
<defs><clipPath id="mc"><rect x="243" y="129" width="460" height="548"/></clipPath></defs>
<g clip-path="url(#mc)">
<rect x="243" y="129" width="460" height="548" fill="#000"/>
<path id="band" fill="#fff" d="M292.3,129 L292.7,141.3 298.6,160.4 299.5,171.6 299,207.4 303,218.6 308,226.5 309.6,247.8 308,265.7 301.7,271.3 295.7,275.8 291.2,282.5 293.4,283.6 289,289 285.6,290.1 277.7,296.2 272.1,295.7 260.9,299.5 243,292.4
L243,371.9 254.2,365.2 272.1,358.5 294.5,355.1 304.6,355.6 314.7,363 328.2,370.8 337.1,372.4 359.5,366.3 368.5,358.5 381.9,340.5 395.4,320.4 403,310.3 438.3,289 453.4,280.3 470.2,278 494.9,278 508.3,281.4 537.5,284.1 546.4,288.1 553,291.7 562,293 570.9,295.7 572.7,300.2 571.4,305.8 575.4,314.8 586.6,321.5 618,334.9 643.8,343.5 669.5,338.7 703,332.7
L703,192.4 698.7,197.3 684.1,205.2 674,217.5 660.6,231 649.4,237.7 630.3,238.8 613.5,236.1 593.3,226.5 579.9,217.1 558,210 506.1,199.1 489.3,201.4 470.2,216.4 445.6,236.6 427.6,246.2 403,251.5 374.1,243.3 380.1,225.4 383,210.8 377.5,194 372.5,173.8 372.5,151.4 364,142.4 352.8,138 351.7,129
L339.8,129 342.7,141.3 348.3,149.2 355,155.9 356.2,168.2 359.5,177.2 366.2,194 370.7,227.6 368.5,237.7 362.9,239.9 356.2,239.5 352.8,235.4 345.6,232.1 346.5,218.6 343.8,182.8 340.9,169.3 332.6,158.1 322.6,144.7 325.9,133.5 324.8,129 Z"/>
<path id="lake" fill="#fff" d="M441.1,340.1 L464.6,339.4 471.3,343.9 473.6,354 471.3,363 465.7,370.8 450.1,375.3 448.9,387.6 438.9,389.8 425.4,395.4 420.9,393.2 422,386.5 433.3,382 434.4,374.2 432.1,365.2 434.4,356.2 440,349.5 Z"/>
<!-- slivers -->
<path fill="#fff" d="M260.9,414.8 L269,410.6 277.7,408.3 278,410 270,413.6 261.5,416 Z"/>
<path fill="#fff" d="M306.9,496.6 L318,498.8 329.5,506.5 329.3,508.3 317,502 306.9,498.6 Z"/>
<g fill="none" stroke="#fff" stroke-linecap="butt" stroke-linejoin="round">
<path stroke-width="3.400" d="M243,479.6 Q252,479 259.8,470.3 T267.2,455.3"/>
<path stroke-width="5" d="M283.3,548.7 Q277,565 274.600,578 T275.600,592.500"/>
<path stroke-width="6.300" d="M306,548.7 Q309,562 305.7,576.7 Q296,590 295,602 T296.5,615"/>
<path stroke-width="3" d="M282,604 L294,616.5"/>
<path stroke-width="3" d="M342.8,650.8 Q341,662 341.2,677"/>
<path stroke-width="1.6" d="M270,647.5 Q267,654 271,659 L283.5,670.3 293.3,669.4 298.7,666.1 Q294,655 288,651 T270,647.5 Z"/>
</g>
<path id="cres" fill="#fff" d="M308,536 Q307,531 315.8,530.1 L321.9,533 321.4,538.6 Q322,544 328,545.4 T341.6,542 L348.3,534.8 352.8,540.9 Q349,549 343.8,551.8 T332.6,554.5 T321.4,552.5 T312.5,545.4 Z"/>
<g fill="none" stroke="#fff" stroke-width="1" stroke-dasharray="1 3.400">
<path d="M302.4,219.8 L295.7,234.3 304.6,257.9 305.7,261.2"/>
<path d="M557.6,334.5 L548.7,336.1 545.3,342.8 544.2,356.2 536.3,357.3 530.7,355.1 525.1,347.3 519.5,340.5 513.9,341 508.3,347.3 506.5,356.2 509.4,365.2 513.9,370.8 515,380.9 508.3,391 497.1,395.4 483.7,396.1 472.5,396.6 463.5,405.5 456.8,412.2 451.2,423.4 445.6,430.2 438.9,436.9 431,445.9 429.9,449 422,455.3 416.4,461.3 409.7,465.8 407.5,475.9 412,488.2 422,491.6 422.7,499.4 427.6,507.3 436.6,502.8 448.9,495.6"/>
<path d="M465.7,499.4 L474.7,510.6 477.6,518.5 479.2,534.2 475.8,547.6 473.6,559.9 470.2,567.8 462.4,579 456.8,584.6 438.9,587.5"/>
<path d="M427.6,598.7 L412,600.9 417.4,600.5 412.9,601 410.2,609.5 415.6,615.8 408.4,621.1 399.4,626.5 390.5,625.6 379.7,617.6 373.4,614 361.7,609.5 353.6,605 350,596 352.7,589.7 359.9,593.3 363.1,588.8 359.9,578 353.6,571.7 345.5,572.6 336.5,582.5 325.7,591.5"/>
<path d="M315.5,590.6 L317.6,608.6 314,626.5 318.5,639.1 324.8,651.7"/>
<path d="M318.5,654.4 L309.5,662.5 302.3,672.4 M306,670 L314.9,676"/>
<path d="M243,627.4 L255.6,622.9 261.9,614 268.2,603.2 273.6,594.2"/>
</g>
</g>
</svg>
<!-- processing toolbox dock -->
<div class="t" style="left:714px;top:131px;letter-spacing:-.05px">Processing Toolbox</div>
<svg style="left:966px;top:132px" width="11" height="11" viewBox="0 0 11 11"><rect x=".5" y=".5" width="10" height="10" rx="2" fill="#f6f6f6" stroke="#6e6e6e"/><rect x="2.500" y="4.500" width="4" height="4" fill="none" stroke="#555" stroke-width=".9"/><path d="M4.500,4.300 v-1.800 h4 v4 h-1.800" fill="none" stroke="#555" stroke-width=".9"/></svg>
<svg style="left:980px;top:132px" width="11" height="11" viewBox="0 0 11 11"><rect x=".5" y=".5" width="10" height="10" rx="2" fill="#f6f6f6" stroke="#6e6e6e"/><path d="M3,3 l5,5 M8,3 l-5,5" stroke="#444" stroke-width="1.700"/></svg>
<div class="a" style="left:240px;top:397px;width:1px;height:1px;background:#fff"></div><div class="a" style="left:239px;top:396px;width:1px;height:1px;background:#b4b4b4"></div>
<div class="a" style="left:240px;top:400px;width:1px;height:1px;background:#fff"></div><div class="a" style="left:239px;top:399px;width:1px;height:1px;background:#b4b4b4"></div>
<div class="a" style="left:240px;top:403px;width:1px;height:1px;background:#fff"></div><div class="a" style="left:239px;top:402px;width:1px;height:1px;background:#b4b4b4"></div>
<div class="a" style="left:240px;top:406px;width:1px;height:1px;background:#fff"></div><div class="a" style="left:239px;top:405px;width:1px;height:1px;background:#b4b4b4"></div>
<div class="a" style="left:240px;top:409px;width:1px;height:1px;background:#fff"></div><div class="a" style="left:239px;top:408px;width:1px;height:1px;background:#b4b4b4"></div>
<div class="a" style="left:240px;top:412px;width:1px;height:1px;background:#fff"></div><div class="a" style="left:239px;top:411px;width:1px;height:1px;background:#b4b4b4"></div>
<div class="a" style="left:708px;top:397px;width:1px;height:1px;background:#fff"></div><div class="a" style="left:707px;top:396px;width:1px;height:1px;background:#b4b4b4"></div>
<div class="a" style="left:708px;top:400px;width:1px;height:1px;background:#fff"></div><div class="a" style="left:707px;top:399px;width:1px;height:1px;background:#b4b4b4"></div>
<div class="a" style="left:708px;top:403px;width:1px;height:1px;background:#fff"></div><div class="a" style="left:707px;top:402px;width:1px;height:1px;background:#b4b4b4"></div>
<div class="a" style="left:708px;top:406px;width:1px;height:1px;background:#fff"></div><div class="a" style="left:707px;top:405px;width:1px;height:1px;background:#b4b4b4"></div>
<div class="a" style="left:708px;top:409px;width:1px;height:1px;background:#fff"></div><div class="a" style="left:707px;top:408px;width:1px;height:1px;background:#b4b4b4"></div>
<div class="a" style="left:708px;top:412px;width:1px;height:1px;background:#fff"></div><div class="a" style="left:707px;top:411px;width:1px;height:1px;background:#b4b4b4"></div>
<svg style="left:717px;top:154px" width="20" height="17" viewBox="0 0 20 17"><g fill="#d8261c"><circle cx="6" cy="5.500" r="3.200"/><rect x="5.200" y=".3" width="1.600" height="10.400" transform="rotate(0 6 5.500)"/><rect x="5.200" y=".3" width="1.600" height="10.400" transform="rotate(45 6 5.500)"/><rect x="5.200" y=".3" width="1.600" height="10.400" transform="rotate(90 6 5.500)"/><rect x="5.200" y=".3" width="1.600" height="10.400" transform="rotate(135 6 5.500)"/></g><circle cx="6" cy="5.500" r="1.200" fill="#fff"/><g fill="#777"><circle cx="13" cy="8" r="2.600"/><rect x="12.400" y="3.800" width="1.200" height="8.400" transform="rotate(0 13 8)"/><rect x="12.400" y="3.800" width="1.200" height="8.400" transform="rotate(45 13 8)"/><rect x="12.400" y="3.800" width="1.200" height="8.400" transform="rotate(90 13 8)"/><rect x="12.400" y="3.800" width="1.200" height="8.400" transform="rotate(135 13 8)"/></g><circle cx="13" cy="8" r="1" fill="#fff"/><g fill="#6f9fe0"><circle cx="8.500" cy="12" r="2.400"/><rect x="7.900" y="8" width="1.200" height="8" transform="rotate(0 8.500 12)"/><rect x="7.900" y="8" width="1.200" height="8" transform="rotate(45 8.500 12)"/><rect x="7.900" y="8" width="1.200" height="8" transform="rotate(90 8.500 12)"/><rect x="7.900" y="8" width="1.200" height="8" transform="rotate(135 8.500 12)"/></g><circle cx="8.500" cy="12" r=".9" fill="#fff"/><path d="M13.500,13.500 h5 l-2.500,2.800 z" fill="#444"/></svg>
<svg style="left:743.500px;top:154px" width="18" height="17" viewBox="0 0 18 17"><path d="M7.500,.6 q-3.600,0 -3.600,2.400 v2 h3.900 v.7 h-5.400 q-2.300,0 -2.300,3.200 q0,3.200 2.300,3.200 h1.400 v-2.100 q0,-2.100 2.200,-2.100 h3.500 q1.800,0 1.800,-1.900 v-3 q0,-2.400 -3.800,-2.400 z" fill="#3b78aa"/><circle cx="5.700" cy="2.600" r=".7" fill="#fff"/><path d="M8,15.400 q3.600,0 3.600,-2.400 v-2 h-3.900 v-.7 h5.400 q2.300,0 2.300,-3.200 q0,-3.200 -2.300,-3.200 h-1.400 v2.100 q0,2.100 -2.200,2.100 h-3.500 q-1.800,0 -1.800,1.900 v3 q0,2.400 3.800,2.400 z" fill="#fdd340"/><circle cx="9.800" cy="13.400" r=".7" fill="#fff"/><path d="M12.500,13.500 h5 l-2.500,2.800 z" fill="#444"/></svg>
<svg style="left:768px;top:154px" width="17" height="17" viewBox="0 0 17 17"><circle cx="8.300" cy="8.300" r="7.400" fill="#f8f8f8" stroke="#8a8a8a" stroke-width="1.200"/><path d="M8.300,3.500 v5 l3.200,2.200" fill="none" stroke="#707070" stroke-width="1.200"/></svg>
<svg style="left:794px;top:154px" width="14" height="17" viewBox="0 0 14 17"><path d="M1,1 h7.500 l4,4 v10.500 h-11.500 z" fill="#f0f0f0" stroke="#a8a8a8"/><path d="M8.500,1 v4 h4" fill="none" stroke="#a8a8a8"/><path d="M3,7.500 h7.500 M3,9.700 h7.500 M3,11.900 h7.500 M3,14 h7.500" stroke="#9a9a9a" stroke-width=".9"/></svg>
<div class="a" style="left:817px;top:156px;width:1px;height:13px;background:#d0d0d0"></div>
<svg style="left:825px;top:154px" width="16" height="17" viewBox="0 0 16 17"><path d="M1.500,1.500 h9 v8 l-3,3 h-6 z" fill="#dddbd2" stroke="#d0cec6" stroke-width=".6"/><path d="M12.500,3 l2.500,1.200 -5,9 -2.400,1.800 .2,-3 z" fill="#e8e6e0" stroke="#d4d2cc" stroke-width=".5"/></svg>
<div class="a" style="left:849px;top:156px;width:1px;height:13px;background:#d0d0d0"></div>
<svg style="left:856px;top:154px" width="18" height="17" viewBox="0 0 18 17"><path d="M7.500,6.500 l8.300,8.300" stroke="#b08a1a" stroke-width="4" stroke-linecap="round"/><path d="M7.500,6.500 l8.300,8.300" stroke="#f0d060" stroke-width="2.400" stroke-linecap="round"/><path d="M6.500,.8 a4,4 0 1 0 3,6.500 l-2.500,-.2 -1.500,-1.800 .6,-2.300 2.500,-.6 a4,4 0 0 0 -2.100,-1.600 z" fill="#cfcfcf" stroke="#6a6a6a" stroke-width=".8"/></svg>
<div class="a" style="left:710px;top:178px;width:283px;height:22px;background:#fff;border:1px solid #b4b4b4;border-radius:3px"></div>
<svg style="left:719px;top:183px" width="13" height="13" viewBox="0 0 13 13"><circle cx="5" cy="5" r="3.800" fill="none" stroke="#8a8a8a" stroke-width="1.200"/><path d="M7.800,7.800 l4,4" stroke="#8a8a8a" stroke-width="1.400"/></svg>
<div class="t" style="left:738.500px;top:182.500px;transform:scaleX(0.934);transform-origin:0 0;">prox</div>
<svg style="left:971px;top:184px" width="14" height="10" viewBox="0 0 14 10"><path d="M4.500,.3 h8.500 q.8,0 .8,.8 v7.800 q0,.8 -.8,.8 h-8.500 l-4.300,-4.700 z" fill="#9a9a9a"/><path d="M6.500,2.800 l4.400,4.400 M10.900,2.800 l-4.400,4.400" stroke="#fff" stroke-width="1.300"/></svg>
<div class="a" style="left:710px;top:200px;width:283px;height:478px;background:#fff;border:1px solid #a0a0a0;border-color:#a6a6a6 #c8c8c8 #c8c8c8 #a6a6a6"></div>
<div class="a" style="left:711px;top:234px;width:281px;height:18px;background:#3399ff"></div>
<svg style="left:716.5px;top:208.0px" width="8" height="5" viewBox="0 0 8 5"><path d="M0,0 h8 l-4,4.500 z" fill="#505050"/></svg>
<svg style="left:733px;top:202.0px" width="17" height="17" viewBox="0 0 17 17"><circle cx="9.500" cy="8" r="5.500" fill="#5a9ad8"/><path d="M6,5 q2,-2 4,0 l1,3 -3,2 -2,-1 z M11,9 l3,-1 v3 l-2,1 z" fill="#3f8f3f"/><path d="M3.500,.8 l5,4.400 M2,3.500 l4,-1.500 M4.500,0 l1,3.500" stroke="#111" stroke-width="1"/><text x="-.3" y="16.600" font-family="Liberation Sans" font-weight="bold" font-size="7.500" fill="#000" textLength="17.300" lengthAdjust="spacingAndGlyphs">GDAL</text></svg>
<div class="t" style="left:756px;top:203.5px;transform:scaleX(0.887);transform-origin:0 0;">GDAL</div>
<svg style="left:736.5px;top:224.2px" width="8" height="5" viewBox="0 0 8 5"><path d="M0,0 h8 l-4,4.500 z" fill="#505050"/></svg>
<div class="t" style="left:754px;top:219.7px;transform:scaleX(0.914);transform-origin:0 0;">Raster analysis</div>
<svg style="left:774px;top:235.5px" width="16" height="16" viewBox="0 0 16 16"><rect width="16" height="16" fill="#5fb8a0"/><path d="M0,0 h5 l4,8 h3 v8 h-5 l-3,-7 h-4 z" fill="#8fd4c0"/><path d="M2.500,1.500 h3.500 l3.500,7.500 h3 v5.500 h-4 l-3.500,-7.500 h-2.500 z" fill="#b8c8e8" stroke="#7090c0" stroke-width=".6"/></svg>
<div class="t" style="left:796px;top:236.5px;color:#fff;letter-spacing:-0.09px;">Proximity (raster distance)</div>
<svg style="left:716.5px;top:258.8px" width="8" height="5" viewBox="0 0 8 5"><path d="M0,0 h8 l-4,4.500 z" fill="#505050"/></svg>
<svg style="left:733px;top:252.8px" width="16" height="17" viewBox="0 0 16 17"><path d="M8,.8 l6.800,6.800 -6.800,6.800 -6.800,-6.800 z" fill="#f4f8f4" stroke="#8a8a8a" stroke-width=".9"/><path d="M8,13 q-.5,-5 -4,-7 q3,.5 3.700,3.500 q-.2,-4 .3,-6.500 q.6,2.500 .4,6.500 q.8,-3 3.600,-3.500 q-3.500,2 -4,7 z" fill="#2f9a2f" stroke="#1f7a1f" stroke-width=".4"/><path d="M2,15.800 h12" stroke="#555" stroke-width="1.100"/></svg>
<div class="t" style="left:756px;top:254.3px;transform:scaleX(0.828);transform-origin:0 0;">GRASS</div>
<svg style="left:736.5px;top:275.2px" width="8" height="5" viewBox="0 0 8 5"><path d="M0,0 h8 l-4,4.500 z" fill="#505050"/></svg>
<div class="t" style="left:754px;top:270.7px;letter-spacing:-0.05px;">Imagery (i.*)</div>
<svg style="left:774px;top:287px" width="16" height="17" viewBox="0 0 16 17"><path d="M8,.8 l6.800,6.800 -6.800,6.800 -6.800,-6.800 z" fill="#f4f8f4" stroke="#8a8a8a" stroke-width=".9"/><path d="M8,13 q-.5,-5 -4,-7 q3,.5 3.700,3.500 q-.2,-4 .3,-6.500 q.6,2.500 .4,6.500 q.8,-3 3.600,-3.500 q-3.500,2 -4,7 z" fill="#2f9a2f" stroke="#1f7a1f" stroke-width=".4"/><path d="M2,15.800 h12" stroke="#555" stroke-width="1.100"/></svg>
<div class="t" style="left:796px;top:288px;color:#000;letter-spacing:-0.12px;">i.eb.netrad</div>
<svg style="left:774px;top:304.6px" width="16" height="17" viewBox="0 0 16 17"><path d="M8,.8 l6.800,6.800 -6.800,6.800 -6.800,-6.800 z" fill="#f4f8f4" stroke="#8a8a8a" stroke-width=".9"/><path d="M8,13 q-.5,-5 -4,-7 q3,.5 3.700,3.500 q-.2,-4 .3,-6.500 q.6,2.500 .4,6.500 q.8,-3 3.600,-3.500 q-3.500,2 -4,7 z" fill="#2f9a2f" stroke="#1f7a1f" stroke-width=".4"/><path d="M2,15.800 h12" stroke="#555" stroke-width="1.100"/></svg>
<div class="t" style="left:796px;top:305.6px;color:#000;letter-spacing:-0.04px;">i.eb.soilheatflux</div>
<svg style="left:716.5px;top:328.2px" width="8" height="5" viewBox="0 0 8 5"><path d="M0,0 h8 l-4,4.500 z" fill="#505050"/></svg>
<svg style="left:733px;top:322.2px" width="16" height="16" viewBox="0 0 16 16"><path d="M12.600,3.400 a6.600,6.600 0 1 0 1.900,4.600" fill="none" stroke="#1f5fb0" stroke-width="2.100"/><path d="M1.800,5.300 q5,.8 6.500,3.400 t6,3.400 M3,10.800 q4,-1.800 8.500,.4 M4.800,2.800 q3,1.800 5.400,.2" fill="none" stroke="#1f5fb0" stroke-width="1.900"/><path d="M10,.6 l4.800,1.200 -1.800,4.400 z" fill="#1f5fb0"/></svg>
<div class="t" style="left:756px;top:323.7px;transform:scaleX(0.878);transform-origin:0 0;">SAGA</div>
<svg style="left:736.5px;top:344.6px" width="8" height="5" viewBox="0 0 8 5"><path d="M0,0 h8 l-4,4.500 z" fill="#505050"/></svg>
<div class="t" style="left:754px;top:340.1px;letter-spacing:-0.17px;">Raster creation tools</div>
<svg style="left:774px;top:356px" width="16" height="16" viewBox="0 0 16 16"><path d="M12.600,3.400 a6.600,6.600 0 1 0 1.900,4.600" fill="none" stroke="#1f5fb0" stroke-width="2.100"/><path d="M1.800,5.300 q5,.8 6.500,3.400 t6,3.400 M3,10.800 q4,-1.800 8.500,.4 M4.800,2.800 q3,1.800 5.400,.2" fill="none" stroke="#1f5fb0" stroke-width="1.900"/><path d="M10,.6 l4.800,1.200 -1.800,4.400 z" fill="#1f5fb0"/></svg>
<div class="t" style="left:796px;top:357px;color:#000;">B-spline approximation</div>
<svg style="left:736.5px;top:377.5px" width="8" height="5" viewBox="0 0 8 5"><path d="M0,0 h8 l-4,4.500 z" fill="#505050"/></svg>
<div class="t" style="left:754px;top:373px;letter-spacing:-0.28px;">Raster tools</div>
<svg style="left:774px;top:389px" width="16" height="16" viewBox="0 0 16 16"><path d="M12.600,3.400 a6.600,6.600 0 1 0 1.900,4.600" fill="none" stroke="#1f5fb0" stroke-width="2.100"/><path d="M1.800,5.300 q5,.8 6.500,3.400 t6,3.400 M3,10.800 q4,-1.800 8.500,.4 M4.800,2.800 q3,1.800 5.400,.2" fill="none" stroke="#1f5fb0" stroke-width="1.900"/><path d="M10,.6 l4.800,1.200 -1.800,4.400 z" fill="#1f5fb0"/></svg>
<div class="t" style="left:796px;top:390px;color:#000;letter-spacing:-0.09px;">Proximity raster</div>
<svg style="left:774px;top:407px" width="16" height="16" viewBox="0 0 16 16"><path d="M12.600,3.400 a6.600,6.600 0 1 0 1.900,4.600" fill="none" stroke="#1f5fb0" stroke-width="2.100"/><path d="M1.800,5.300 q5,.8 6.500,3.400 t6,3.400 M3,10.800 q4,-1.800 8.500,.4 M4.800,2.800 q3,1.800 5.400,.2" fill="none" stroke="#1f5fb0" stroke-width="1.900"/><path d="M10,.6 l4.800,1.200 -1.800,4.400 z" fill="#1f5fb0"/></svg>
<div class="t" style="left:796px;top:408px;color:#000;letter-spacing:-0.03px;">Raster proximity buffer</div>
<svg style="left:835.700px;top:654.200px" width="13.900" height="21.400" viewBox="0 0 13 20"><path d="M.7,.9 v15.200 l3.500,-3.300 2.400,5.600 2.200,-1 -2.400,-5.400 h4.800 z" fill="#fff" stroke="#0a0a1e" stroke-width="1.100" stroke-linejoin="round"/></svg>
<!-- status bar -->
<div class="a" style="left:249px;top:684px;width:33px;height:16px;overflow:hidden"><div class="t" style="left:-15px;top:1.500px;letter-spacing:-.3px">Coordina</div></div>
<div class="a" style="left:286px;top:681px;width:92px;height:22px;background:#fff;border:1px solid #b9b9b9;border-radius:3px"></div>
<div class="t" style="left:290px;top:685.500px;transform:scaleX(0.906);transform-origin:0 0;">503596,2938215</div>
<svg style="left:381px;top:682px" width="20" height="20" viewBox="0 0 20 20"><g transform="rotate(-25 10 10)"><rect x="5" y="4" width="10" height="14" rx="4.500" fill="#e4e4e4" stroke="#444" stroke-width="1.100"/><path d="M5,9.500 h10 M10,4 v5.500" stroke="#444" stroke-width=".9"/><circle cx="10" cy="13.500" r="2" fill="#aaa" stroke="#444" stroke-width=".7"/><path d="M10,4 q0,-3 4,-3.500" fill="none" stroke="#444" stroke-width=".9"/></g></svg>
<div class="t" style="left:410.500px;top:685.500px">a</div>
<div class="a" style="left:419px;top:681px;width:81px;height:22px;background:#fff;border:1px solid #b9b9b9;border-radius:3px"></div>
<div class="t" style="left:423px;top:685.500px;transform:scaleX(0.899);transform-origin:0 0;">1:175188</div>
<div class="a" style="left:479px;top:683px;width:1px;height:19px;background:#c8c8c8"></div>
<svg style="left:485px;top:690px" width="8" height="5" viewBox="0 0 8 5"><path d="M0,0 h8 l-4,4.500 z" fill="#555"/></svg>
<svg style="left:511px;top:684px" width="14" height="17" viewBox="0 0 14 17"><path d="M3.500,8 v-3 a3.500,3.500 0 0 1 7,0 v3" fill="none" stroke="#8a8a8a" stroke-width="1.800"/><rect x="1" y="7.500" width="12" height="9" rx="1.500" fill="#7a7a7a"/></svg>
<div class="a" style="left:533px;top:684px;width:26px;height:16px;overflow:hidden"><div class="t" style="left:-10px;top:1.500px;letter-spacing:-.3px">Magnifier</div></div>
<div class="a" style="left:561px;top:681px;width:88px;height:22px;background:#fff;border:1px solid #b9b9b9;border-radius:3px"></div>
<div class="t" style="left:566px;top:685.500px;transform:scaleX(0.928);transform-origin:0 0;">100%</div>
<svg style="left:636.5px;top:686px" width="8" height="13" viewBox="0 0 8 13"><path d="M0,5 h8 l-4,-4.500 z M0,8 h8 l-4,4.500 z" fill="#555"/></svg>
<div class="a" style="left:657px;top:684px;width:22px;height:16px;overflow:hidden"><div class="t" style="left:-9px;top:1.500px;letter-spacing:-.3px">Rotation</div></div>
<div class="a" style="left:688px;top:681px;width:84px;height:22px;background:#fff;border:1px solid #b9b9b9;border-radius:3px"></div>
<div class="t" style="left:692.500px;top:685.500px;transform:scaleX(0.866);transform-origin:0 0;">0.0 °</div>
<svg style="left:759.5px;top:686px" width="8" height="13" viewBox="0 0 8 13"><path d="M0,5 h8 l-4,-4.500 z M0,8 h8 l-4,4.500 z" fill="#555"/></svg>
<svg style="left:778.500px;top:686.500px" width="13" height="13" viewBox="0 0 13 13"><rect x=".5" y=".5" width="12" height="12" fill="#fff" stroke="#8e8f8f"/><path d="M2.800,6.300 l2.500,3.300 4.700,-6.800" fill="none" stroke="#000" stroke-width="1.900"/></svg>
<div class="t" style="left:796.500px;top:685.500px;transform:scaleX(0.866);transform-origin:0 0;">Render</div>
<svg style="left:850px;top:686px" width="15" height="14" viewBox="0 0 15 14"><ellipse cx="7.500" cy="7" rx="6.800" ry="6.200" fill="#f4f4f4" stroke="#555" stroke-width=".9"/><ellipse cx="7.500" cy="7" rx="3" ry="6.200" fill="none" stroke="#555" stroke-width=".7"/><path d="M.7,7 h13.600 M1.800,3.800 h11.400 M1.800,10.200 h11.400 M7.500,.8 v12.400" stroke="#555" stroke-width=".7"/><path d="M4,1 l3.500,-1 3.500,1" fill="none" stroke="#555" stroke-width=".7"/></svg>
<div class="t" style="left:868px;top:685.500px;transform:scaleX(0.842);transform-origin:0 0;">EPSG:32646</div>
<svg style="left:947px;top:685px" width="17" height="15" viewBox="0 0 17 15"><path d="M8.500,.5 q8,0 8,5.700 q0,5.700 -8,5.700 q-1,0 -2,-.2 q-2,2.500 -5,2.800 q2,-1.500 2,-4 q-3,-1.500 -3,-4.300 q0,-5.700 8,-5.700 z" fill="#666"/><circle cx="5" cy="6.200" r="1.100" fill="#fff"/><circle cx="8.500" cy="6.200" r="1.100" fill="#fff"/><circle cx="12" cy="6.200" r="1.100" fill="#fff"/></svg>
<div class="a" style="left:991px;top:695px;width:1px;height:1px;background:#fff"></div><div class="a" style="left:990px;top:694px;width:1px;height:1px;background:#a8a8a8"></div>
<div class="a" style="left:988px;top:698px;width:1px;height:1px;background:#fff"></div><div class="a" style="left:987px;top:697px;width:1px;height:1px;background:#a8a8a8"></div>
<div class="a" style="left:991px;top:698px;width:1px;height:1px;background:#fff"></div><div class="a" style="left:990px;top:697px;width:1px;height:1px;background:#a8a8a8"></div>
<div class="a" style="left:985px;top:701px;width:1px;height:1px;background:#fff"></div><div class="a" style="left:984px;top:700px;width:1px;height:1px;background:#a8a8a8"></div>
<div class="a" style="left:988px;top:701px;width:1px;height:1px;background:#fff"></div><div class="a" style="left:987px;top:700px;width:1px;height:1px;background:#a8a8a8"></div>
<div class="a" style="left:991px;top:701px;width:1px;height:1px;background:#fff"></div><div class="a" style="left:990px;top:700px;width:1px;height:1px;background:#a8a8a8"></div>
<div class="a" style="left:982px;top:704px;width:1px;height:1px;background:#fff"></div><div class="a" style="left:981px;top:703px;width:1px;height:1px;background:#a8a8a8"></div>
<div class="a" style="left:985px;top:704px;width:1px;height:1px;background:#fff"></div><div class="a" style="left:984px;top:703px;width:1px;height:1px;background:#a8a8a8"></div>
<div class="a" style="left:988px;top:704px;width:1px;height:1px;background:#fff"></div><div class="a" style="left:987px;top:703px;width:1px;height:1px;background:#a8a8a8"></div>
<div class="a" style="left:991px;top:704px;width:1px;height:1px;background:#fff"></div><div class="a" style="left:990px;top:703px;width:1px;height:1px;background:#a8a8a8"></div>
</body></html>
